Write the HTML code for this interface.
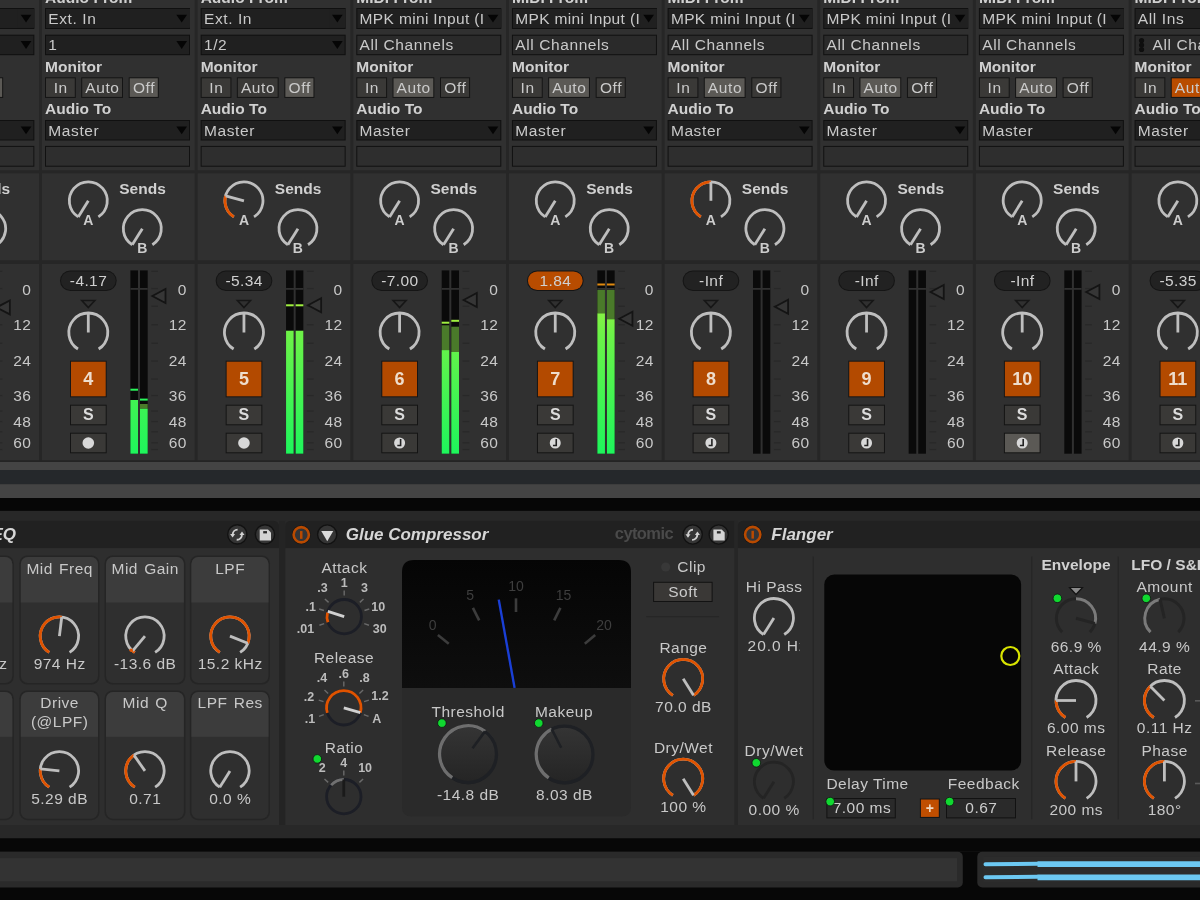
<!DOCTYPE html>
<html><head><meta charset="utf-8"><style>
html,body{margin:0;padding:0;background:#262626;overflow:hidden;width:1200px;height:900px}
svg{display:block;will-change:transform}
#wrap{width:1200px;height:900px}
</style></head><body><div id="wrap">
<svg width="1200" height="900" viewBox="0 0 1200 900">
<defs>
<linearGradient id="mg" gradientUnits="userSpaceOnUse" x1="0" y1="270" x2="0" y2="454">
<stop offset="0" stop-color="#b8f040"/><stop offset="0.35" stop-color="#6cf248"/><stop offset="1" stop-color="#1ef55c"/>
</linearGradient>
</defs>
<rect x="0.00" y="0.00" width="1200.00" height="900.00" fill="#262626"/>
<rect x="-113.65" y="-10.00" width="152.70" height="180.30" fill="#303030"/>
<rect x="-113.65" y="173.40" width="152.70" height="86.90" fill="#303030"/>
<rect x="-113.65" y="264.00" width="152.70" height="196.70" fill="#303030"/>
<text x="-110.65" y="2.55" font-family="Liberation Sans" font-size="15.5" fill="#d0d0d0" text-anchor="start" font-weight="bold" letter-spacing="0.02999999999999997">Audio From</text>
<rect x="-110.65" y="8.00" width="145.00" height="21.00" fill="#101010"/>
<rect x="-109.65" y="9.00" width="143.00" height="19.00" fill="#202020"/>
<text x="-107.35" y="23.85" font-family="Liberation Sans" font-size="15.5" fill="#c9c9c9" text-anchor="start" letter-spacing="0.6"></text>
<rect x="17.85" y="9.00" width="16.50" height="18.80" fill="#202020"/>
<path d="M20.70,14.70 L31.40,14.70 L26.05,22.50 Z" fill="#050505"/>
<rect x="-110.65" y="34.70" width="145.00" height="20.50" fill="#101010"/>
<rect x="-109.65" y="35.70" width="143.00" height="18.50" fill="#202020"/>
<text x="-107.35" y="50.25" font-family="Liberation Sans" font-size="15.5" fill="#c9c9c9" text-anchor="start" letter-spacing="0.6"></text>
<path d="M20.70,41.10 L31.40,41.10 L26.05,48.90 Z" fill="#050505"/>
<text x="-110.65" y="71.75" font-family="Liberation Sans" font-size="15.5" fill="#d0d0d0" text-anchor="start" font-weight="bold" letter-spacing="0.02999999999999997">Monitor</text>
<rect x="-110.65" y="77.30" width="30.80" height="20.60" fill="#141414"/>
<rect x="-109.65" y="78.30" width="28.80" height="18.60" fill="#3a3937"/>
<text x="-94.95" y="92.85" font-family="Liberation Sans" font-size="15.5" fill="#cacaca" text-anchor="middle" letter-spacing="0.6">In</text>
<rect x="-74.45" y="77.30" width="41.80" height="20.60" fill="#141414"/>
<rect x="-73.45" y="78.30" width="39.80" height="18.60" fill="#3a3937"/>
<text x="-53.25" y="92.85" font-family="Liberation Sans" font-size="15.5" fill="#cacaca" text-anchor="middle" letter-spacing="0.6">Auto</text>
<rect x="-26.95" y="77.30" width="30.10" height="20.60" fill="#141414"/>
<rect x="-25.95" y="78.30" width="28.10" height="18.60" fill="#5b5955"/>
<text x="-11.60" y="92.85" font-family="Liberation Sans" font-size="15.5" fill="#cacaca" text-anchor="middle" letter-spacing="0.6">Off</text>
<text x="-110.65" y="114.35" font-family="Liberation Sans" font-size="15.5" fill="#d0d0d0" text-anchor="start" font-weight="bold" letter-spacing="0.02999999999999997">Audio To</text>
<rect x="-110.65" y="120.00" width="145.00" height="20.50" fill="#101010"/>
<rect x="-109.65" y="121.00" width="143.00" height="18.50" fill="#202020"/>
<text x="-107.35" y="135.55" font-family="Liberation Sans" font-size="15.5" fill="#c9c9c9" text-anchor="start" letter-spacing="0.6">Master</text>
<path d="M20.70,126.40 L31.40,126.40 L26.05,134.20 Z" fill="#050505"/>
<rect x="-110.65" y="145.90" width="145.00" height="20.80" fill="#111111"/>
<rect x="-109.65" y="146.90" width="143.00" height="18.80" fill="#2e2e2e"/>
<text x="-13.14" y="194.05" font-family="Liberation Sans" font-size="15.5" fill="#d0d0d0" text-anchor="middle" font-weight="bold" letter-spacing="0.02999999999999997">Sends</text>
<path d="M-77.42,216.91 A19,19 0 1 1 -57.28,216.91" fill="none" stroke="#bebebe" stroke-width="2.8" stroke-linecap="butt"/>
<line x1="-67.35" y1="200.80" x2="-77.42" y2="216.91" stroke="#bebebe" stroke-width="2.8" stroke-linecap="butt"/>
<path d="M-23.42,244.81 A19,19 0 1 1 -3.28,244.81" fill="none" stroke="#bebebe" stroke-width="2.8" stroke-linecap="butt"/>
<line x1="-13.35" y1="228.70" x2="-23.42" y2="244.81" stroke="#bebebe" stroke-width="2.8" stroke-linecap="butt"/>
<text x="-67.35" y="225.31" font-family="Liberation Sans" font-size="14" fill="#cccccc" text-anchor="middle" font-weight="bold">A</text>
<text x="-13.45" y="252.81" font-family="Liberation Sans" font-size="14" fill="#cccccc" text-anchor="middle" font-weight="bold">B</text>
<rect x="-95.65" y="270.40" width="56.70" height="20.60" fill="#151515" rx="10.3"/>
<rect x="-94.65" y="271.40" width="54.70" height="18.60" fill="#222222" rx="9.3"/>
<text x="-67.15" y="285.75" font-family="Liberation Sans" font-size="15.5" fill="#d0d0d0" text-anchor="middle" letter-spacing="0.4">-</text>
<path d="M-73.85,300.5 L-60.85,300.5 L-67.35,307.5 Z" fill="none" stroke="#161616" stroke-width="1.6"/>
<path d="M-77.68,349.04 A19.5,19.5 0 1 1 -57.02,349.04" fill="none" stroke="#bebebe" stroke-width="2.8" stroke-linecap="butt"/>
<line x1="-67.35" y1="332.50" x2="-67.35" y2="313.00" stroke="#bebebe" stroke-width="2.8" stroke-linecap="butt"/>
<rect x="-85.65" y="360.70" width="36.70" height="36.60" fill="#161616"/>
<rect x="-84.65" y="361.70" width="34.70" height="34.60" fill="#b34a00"/>
<text x="-67.35" y="384.94" font-family="Liberation Sans" font-size="18" fill="#eeddcc" text-anchor="middle" font-weight="bold">3</text>
<rect x="-85.65" y="404.70" width="36.70" height="20.60" fill="#141414"/>
<rect x="-84.65" y="405.70" width="34.70" height="18.60" fill="#3a3937"/>
<text x="-67.35" y="420.23" font-family="Liberation Sans" font-size="16" fill="#dcdcdc" text-anchor="middle" font-weight="bold">S</text>
<rect x="-85.65" y="432.70" width="36.70" height="20.60" fill="#141414"/>
<rect x="-84.65" y="433.70" width="34.70" height="18.60" fill="#3a3937"/>
<circle cx="-67.35" cy="443" r="5.8" fill="#d8d8d8"/>
<rect x="-25.25" y="270.40" width="7.60" height="183.30" fill="#0a0a0a"/>
<rect x="-15.65" y="270.40" width="7.70" height="183.30" fill="#0a0a0a"/>
<rect x="-25.25" y="288.00" width="17.30" height="1.80" fill="#303030"/>
<rect x="-4.35" y="270.70" width="6.70" height="1.30" fill="#282828"/>
<rect x="-4.35" y="287.90" width="6.70" height="1.30" fill="#282828"/>
<rect x="-4.35" y="305.60" width="6.70" height="1.30" fill="#282828"/>
<rect x="-4.35" y="324.10" width="6.70" height="1.30" fill="#282828"/>
<rect x="-4.35" y="342.60" width="6.70" height="1.30" fill="#282828"/>
<rect x="-4.35" y="360.40" width="6.70" height="1.30" fill="#282828"/>
<rect x="-4.35" y="378.40" width="6.70" height="1.30" fill="#282828"/>
<rect x="-4.35" y="394.90" width="6.70" height="1.30" fill="#282828"/>
<rect x="-4.35" y="410.40" width="6.70" height="1.30" fill="#282828"/>
<rect x="-4.35" y="420.90" width="6.70" height="1.30" fill="#282828"/>
<rect x="-4.35" y="431.20" width="6.70" height="1.30" fill="#282828"/>
<rect x="-4.35" y="442.20" width="6.70" height="1.30" fill="#282828"/>
<rect x="-4.35" y="448.90" width="6.70" height="1.30" fill="#282828"/>
<path d="M-3.35,307.40 L9.85,300.40 L9.85,314.40 Z" fill="#363636" stroke="#141414" stroke-width="1.8"/>
<text x="31.25" y="295.25" font-family="Liberation Sans" font-size="15.5" fill="#c8c8c8" text-anchor="end" letter-spacing="0.4">0</text>
<text x="31.25" y="330.25" font-family="Liberation Sans" font-size="15.5" fill="#c8c8c8" text-anchor="end" letter-spacing="0.4">12</text>
<text x="31.25" y="366.05" font-family="Liberation Sans" font-size="15.5" fill="#c8c8c8" text-anchor="end" letter-spacing="0.4">24</text>
<text x="31.25" y="400.75" font-family="Liberation Sans" font-size="15.5" fill="#c8c8c8" text-anchor="end" letter-spacing="0.4">36</text>
<text x="31.25" y="427.05" font-family="Liberation Sans" font-size="15.5" fill="#c8c8c8" text-anchor="end" letter-spacing="0.4">48</text>
<text x="31.25" y="447.95" font-family="Liberation Sans" font-size="15.5" fill="#c8c8c8" text-anchor="end" letter-spacing="0.4">60</text>
<rect x="42.00" y="-10.00" width="152.70" height="180.30" fill="#303030"/>
<rect x="42.00" y="173.40" width="152.70" height="86.90" fill="#303030"/>
<rect x="42.00" y="264.00" width="152.70" height="196.70" fill="#303030"/>
<text x="45.00" y="2.55" font-family="Liberation Sans" font-size="15.5" fill="#d0d0d0" text-anchor="start" font-weight="bold" letter-spacing="0.02999999999999997">Audio From</text>
<rect x="45.00" y="8.00" width="145.00" height="21.00" fill="#101010"/>
<rect x="46.00" y="9.00" width="143.00" height="19.00" fill="#202020"/>
<text x="48.30" y="23.85" font-family="Liberation Sans" font-size="15.5" fill="#c9c9c9" text-anchor="start" letter-spacing="0.6">Ext. In</text>
<rect x="173.50" y="9.00" width="16.50" height="18.80" fill="#202020"/>
<path d="M176.35,14.70 L187.05,14.70 L181.70,22.50 Z" fill="#050505"/>
<rect x="45.00" y="34.70" width="145.00" height="20.50" fill="#101010"/>
<rect x="46.00" y="35.70" width="143.00" height="18.50" fill="#202020"/>
<text x="48.30" y="50.25" font-family="Liberation Sans" font-size="15.5" fill="#c9c9c9" text-anchor="start" letter-spacing="0.6">1</text>
<path d="M176.35,41.10 L187.05,41.10 L181.70,48.90 Z" fill="#050505"/>
<text x="45.00" y="71.75" font-family="Liberation Sans" font-size="15.5" fill="#d0d0d0" text-anchor="start" font-weight="bold" letter-spacing="0.02999999999999997">Monitor</text>
<rect x="45.00" y="77.30" width="30.80" height="20.60" fill="#141414"/>
<rect x="46.00" y="78.30" width="28.80" height="18.60" fill="#3a3937"/>
<text x="60.70" y="92.85" font-family="Liberation Sans" font-size="15.5" fill="#cacaca" text-anchor="middle" letter-spacing="0.6">In</text>
<rect x="81.20" y="77.30" width="41.80" height="20.60" fill="#141414"/>
<rect x="82.20" y="78.30" width="39.80" height="18.60" fill="#3a3937"/>
<text x="102.40" y="92.85" font-family="Liberation Sans" font-size="15.5" fill="#cacaca" text-anchor="middle" letter-spacing="0.6">Auto</text>
<rect x="128.70" y="77.30" width="30.10" height="20.60" fill="#141414"/>
<rect x="129.70" y="78.30" width="28.10" height="18.60" fill="#5b5955"/>
<text x="144.05" y="92.85" font-family="Liberation Sans" font-size="15.5" fill="#cacaca" text-anchor="middle" letter-spacing="0.6">Off</text>
<text x="45.00" y="114.35" font-family="Liberation Sans" font-size="15.5" fill="#d0d0d0" text-anchor="start" font-weight="bold" letter-spacing="0.02999999999999997">Audio To</text>
<rect x="45.00" y="120.00" width="145.00" height="20.50" fill="#101010"/>
<rect x="46.00" y="121.00" width="143.00" height="18.50" fill="#202020"/>
<text x="48.30" y="135.55" font-family="Liberation Sans" font-size="15.5" fill="#c9c9c9" text-anchor="start" letter-spacing="0.6">Master</text>
<path d="M176.35,126.40 L187.05,126.40 L181.70,134.20 Z" fill="#050505"/>
<rect x="45.00" y="145.90" width="145.00" height="20.80" fill="#111111"/>
<rect x="46.00" y="146.90" width="143.00" height="18.80" fill="#2e2e2e"/>
<text x="142.51" y="194.05" font-family="Liberation Sans" font-size="15.5" fill="#d0d0d0" text-anchor="middle" font-weight="bold" letter-spacing="0.02999999999999997">Sends</text>
<path d="M78.23,216.91 A19,19 0 1 1 98.37,216.91" fill="none" stroke="#bebebe" stroke-width="2.8" stroke-linecap="butt"/>
<line x1="88.30" y1="200.80" x2="78.23" y2="216.91" stroke="#bebebe" stroke-width="2.8" stroke-linecap="butt"/>
<path d="M132.23,244.81 A19,19 0 1 1 152.37,244.81" fill="none" stroke="#bebebe" stroke-width="2.8" stroke-linecap="butt"/>
<line x1="142.30" y1="228.70" x2="132.23" y2="244.81" stroke="#bebebe" stroke-width="2.8" stroke-linecap="butt"/>
<text x="88.30" y="225.31" font-family="Liberation Sans" font-size="14" fill="#cccccc" text-anchor="middle" font-weight="bold">A</text>
<text x="142.20" y="252.81" font-family="Liberation Sans" font-size="14" fill="#cccccc" text-anchor="middle" font-weight="bold">B</text>
<rect x="60.00" y="270.40" width="56.70" height="20.60" fill="#151515" rx="10.3"/>
<rect x="61.00" y="271.40" width="54.70" height="18.60" fill="#222222" rx="9.3"/>
<text x="88.50" y="285.75" font-family="Liberation Sans" font-size="15.5" fill="#d0d0d0" text-anchor="middle" letter-spacing="0.4">-4.17</text>
<path d="M81.80,300.5 L94.80,300.5 L88.30,307.5 Z" fill="none" stroke="#161616" stroke-width="1.6"/>
<path d="M77.97,349.04 A19.5,19.5 0 1 1 98.63,349.04" fill="none" stroke="#bebebe" stroke-width="2.8" stroke-linecap="butt"/>
<line x1="88.30" y1="332.50" x2="88.30" y2="313.00" stroke="#bebebe" stroke-width="2.8" stroke-linecap="butt"/>
<rect x="70.00" y="360.70" width="36.70" height="36.60" fill="#161616"/>
<rect x="71.00" y="361.70" width="34.70" height="34.60" fill="#b34a00"/>
<text x="88.30" y="384.94" font-family="Liberation Sans" font-size="18" fill="#eeddcc" text-anchor="middle" font-weight="bold">4</text>
<rect x="70.00" y="404.70" width="36.70" height="20.60" fill="#141414"/>
<rect x="71.00" y="405.70" width="34.70" height="18.60" fill="#3a3937"/>
<text x="88.30" y="420.23" font-family="Liberation Sans" font-size="16" fill="#dcdcdc" text-anchor="middle" font-weight="bold">S</text>
<rect x="70.00" y="432.70" width="36.70" height="20.60" fill="#141414"/>
<rect x="71.00" y="433.70" width="34.70" height="18.60" fill="#3a3937"/>
<circle cx="88.30" cy="443" r="5.8" fill="#d8d8d8"/>
<rect x="130.40" y="270.40" width="7.60" height="183.30" fill="#0a0a0a"/>
<rect x="140.00" y="270.40" width="7.70" height="183.30" fill="#0a0a0a"/>
<rect x="130.40" y="288.00" width="17.30" height="1.80" fill="#303030"/>
<rect x="130.40" y="400.00" width="7.60" height="53.70" fill="url(#mg)"/>
<rect x="130.40" y="388.70" width="7.60" height="2.00" fill="#2af55a"/>
<rect x="140.00" y="404.00" width="7.70" height="4.70" fill="#4a7a2a"/>
<rect x="140.00" y="408.70" width="7.70" height="45.00" fill="url(#mg)"/>
<rect x="140.00" y="398.60" width="7.70" height="2.00" fill="#2af55a"/>
<rect x="151.30" y="270.70" width="6.70" height="1.30" fill="#282828"/>
<rect x="151.30" y="287.90" width="6.70" height="1.30" fill="#282828"/>
<rect x="151.30" y="305.60" width="6.70" height="1.30" fill="#282828"/>
<rect x="151.30" y="324.10" width="6.70" height="1.30" fill="#282828"/>
<rect x="151.30" y="342.60" width="6.70" height="1.30" fill="#282828"/>
<rect x="151.30" y="360.40" width="6.70" height="1.30" fill="#282828"/>
<rect x="151.30" y="378.40" width="6.70" height="1.30" fill="#282828"/>
<rect x="151.30" y="394.90" width="6.70" height="1.30" fill="#282828"/>
<rect x="151.30" y="410.40" width="6.70" height="1.30" fill="#282828"/>
<rect x="151.30" y="420.90" width="6.70" height="1.30" fill="#282828"/>
<rect x="151.30" y="431.20" width="6.70" height="1.30" fill="#282828"/>
<rect x="151.30" y="442.20" width="6.70" height="1.30" fill="#282828"/>
<rect x="151.30" y="448.90" width="6.70" height="1.30" fill="#282828"/>
<path d="M152.30,296.00 L165.50,289.00 L165.50,303.00 Z" fill="#363636" stroke="#141414" stroke-width="1.8"/>
<text x="186.90" y="295.25" font-family="Liberation Sans" font-size="15.5" fill="#c8c8c8" text-anchor="end" letter-spacing="0.4">0</text>
<text x="186.90" y="330.25" font-family="Liberation Sans" font-size="15.5" fill="#c8c8c8" text-anchor="end" letter-spacing="0.4">12</text>
<text x="186.90" y="366.05" font-family="Liberation Sans" font-size="15.5" fill="#c8c8c8" text-anchor="end" letter-spacing="0.4">24</text>
<text x="186.90" y="400.75" font-family="Liberation Sans" font-size="15.5" fill="#c8c8c8" text-anchor="end" letter-spacing="0.4">36</text>
<text x="186.90" y="427.05" font-family="Liberation Sans" font-size="15.5" fill="#c8c8c8" text-anchor="end" letter-spacing="0.4">48</text>
<text x="186.90" y="447.95" font-family="Liberation Sans" font-size="15.5" fill="#c8c8c8" text-anchor="end" letter-spacing="0.4">60</text>
<rect x="197.65" y="-10.00" width="152.70" height="180.30" fill="#303030"/>
<rect x="197.65" y="173.40" width="152.70" height="86.90" fill="#303030"/>
<rect x="197.65" y="264.00" width="152.70" height="196.70" fill="#303030"/>
<text x="200.65" y="2.55" font-family="Liberation Sans" font-size="15.5" fill="#d0d0d0" text-anchor="start" font-weight="bold" letter-spacing="0.02999999999999997">Audio From</text>
<rect x="200.65" y="8.00" width="145.00" height="21.00" fill="#101010"/>
<rect x="201.65" y="9.00" width="143.00" height="19.00" fill="#202020"/>
<text x="203.95" y="23.85" font-family="Liberation Sans" font-size="15.5" fill="#c9c9c9" text-anchor="start" letter-spacing="0.6">Ext. In</text>
<rect x="329.15" y="9.00" width="16.50" height="18.80" fill="#202020"/>
<path d="M332.00,14.70 L342.70,14.70 L337.35,22.50 Z" fill="#050505"/>
<rect x="200.65" y="34.70" width="145.00" height="20.50" fill="#101010"/>
<rect x="201.65" y="35.70" width="143.00" height="18.50" fill="#202020"/>
<text x="203.95" y="50.25" font-family="Liberation Sans" font-size="15.5" fill="#c9c9c9" text-anchor="start" letter-spacing="0.6">1/2</text>
<path d="M332.00,41.10 L342.70,41.10 L337.35,48.90 Z" fill="#050505"/>
<text x="200.65" y="71.75" font-family="Liberation Sans" font-size="15.5" fill="#d0d0d0" text-anchor="start" font-weight="bold" letter-spacing="0.02999999999999997">Monitor</text>
<rect x="200.65" y="77.30" width="30.80" height="20.60" fill="#141414"/>
<rect x="201.65" y="78.30" width="28.80" height="18.60" fill="#3a3937"/>
<text x="216.35" y="92.85" font-family="Liberation Sans" font-size="15.5" fill="#cacaca" text-anchor="middle" letter-spacing="0.6">In</text>
<rect x="236.85" y="77.30" width="41.80" height="20.60" fill="#141414"/>
<rect x="237.85" y="78.30" width="39.80" height="18.60" fill="#3a3937"/>
<text x="258.05" y="92.85" font-family="Liberation Sans" font-size="15.5" fill="#cacaca" text-anchor="middle" letter-spacing="0.6">Auto</text>
<rect x="284.35" y="77.30" width="30.10" height="20.60" fill="#141414"/>
<rect x="285.35" y="78.30" width="28.10" height="18.60" fill="#5b5955"/>
<text x="299.70" y="92.85" font-family="Liberation Sans" font-size="15.5" fill="#cacaca" text-anchor="middle" letter-spacing="0.6">Off</text>
<text x="200.65" y="114.35" font-family="Liberation Sans" font-size="15.5" fill="#d0d0d0" text-anchor="start" font-weight="bold" letter-spacing="0.02999999999999997">Audio To</text>
<rect x="200.65" y="120.00" width="145.00" height="20.50" fill="#101010"/>
<rect x="201.65" y="121.00" width="143.00" height="18.50" fill="#202020"/>
<text x="203.95" y="135.55" font-family="Liberation Sans" font-size="15.5" fill="#c9c9c9" text-anchor="start" letter-spacing="0.6">Master</text>
<path d="M332.00,126.40 L342.70,126.40 L337.35,134.20 Z" fill="#050505"/>
<rect x="200.65" y="145.90" width="145.00" height="20.80" fill="#111111"/>
<rect x="201.65" y="146.90" width="143.00" height="18.80" fill="#2e2e2e"/>
<text x="298.16" y="194.05" font-family="Liberation Sans" font-size="15.5" fill="#d0d0d0" text-anchor="middle" font-weight="bold" letter-spacing="0.02999999999999997">Sends</text>
<path d="M233.88,216.91 A19,19 0 1 1 254.02,216.91" fill="none" stroke="#bebebe" stroke-width="2.8" stroke-linecap="butt"/>
<path d="M233.88,216.91 A19,19 0 0 1 225.60,195.88" fill="none" stroke="#e05300" stroke-width="2.8" stroke-linecap="butt"/>
<line x1="243.95" y1="200.80" x2="225.60" y2="195.88" stroke="#bebebe" stroke-width="2.8" stroke-linecap="butt"/>
<path d="M287.88,244.81 A19,19 0 1 1 308.02,244.81" fill="none" stroke="#bebebe" stroke-width="2.8" stroke-linecap="butt"/>
<line x1="297.95" y1="228.70" x2="287.88" y2="244.81" stroke="#bebebe" stroke-width="2.8" stroke-linecap="butt"/>
<text x="243.95" y="225.31" font-family="Liberation Sans" font-size="14" fill="#cccccc" text-anchor="middle" font-weight="bold">A</text>
<text x="297.85" y="252.81" font-family="Liberation Sans" font-size="14" fill="#cccccc" text-anchor="middle" font-weight="bold">B</text>
<rect x="215.65" y="270.40" width="56.70" height="20.60" fill="#151515" rx="10.3"/>
<rect x="216.65" y="271.40" width="54.70" height="18.60" fill="#222222" rx="9.3"/>
<text x="244.15" y="285.75" font-family="Liberation Sans" font-size="15.5" fill="#d0d0d0" text-anchor="middle" letter-spacing="0.4">-5.34</text>
<path d="M237.45,300.5 L250.45,300.5 L243.95,307.5 Z" fill="none" stroke="#161616" stroke-width="1.6"/>
<path d="M233.62,349.04 A19.5,19.5 0 1 1 254.28,349.04" fill="none" stroke="#bebebe" stroke-width="2.8" stroke-linecap="butt"/>
<line x1="243.95" y1="332.50" x2="243.95" y2="313.00" stroke="#bebebe" stroke-width="2.8" stroke-linecap="butt"/>
<rect x="225.65" y="360.70" width="36.70" height="36.60" fill="#161616"/>
<rect x="226.65" y="361.70" width="34.70" height="34.60" fill="#b34a00"/>
<text x="243.95" y="384.94" font-family="Liberation Sans" font-size="18" fill="#eeddcc" text-anchor="middle" font-weight="bold">5</text>
<rect x="225.65" y="404.70" width="36.70" height="20.60" fill="#141414"/>
<rect x="226.65" y="405.70" width="34.70" height="18.60" fill="#3a3937"/>
<text x="243.95" y="420.23" font-family="Liberation Sans" font-size="16" fill="#dcdcdc" text-anchor="middle" font-weight="bold">S</text>
<rect x="225.65" y="432.70" width="36.70" height="20.60" fill="#141414"/>
<rect x="226.65" y="433.70" width="34.70" height="18.60" fill="#3a3937"/>
<circle cx="243.95" cy="443" r="5.8" fill="#d8d8d8"/>
<rect x="286.05" y="270.40" width="7.60" height="183.30" fill="#0a0a0a"/>
<rect x="295.65" y="270.40" width="7.70" height="183.30" fill="#0a0a0a"/>
<rect x="286.05" y="288.00" width="17.30" height="1.80" fill="#303030"/>
<rect x="286.05" y="330.70" width="7.60" height="123.00" fill="url(#mg)"/>
<rect x="286.05" y="304.30" width="7.60" height="2.00" fill="#a0f040"/>
<rect x="295.65" y="330.70" width="7.70" height="123.00" fill="url(#mg)"/>
<rect x="295.65" y="304.30" width="7.70" height="2.00" fill="#a0f040"/>
<rect x="306.95" y="270.70" width="6.70" height="1.30" fill="#282828"/>
<rect x="306.95" y="287.90" width="6.70" height="1.30" fill="#282828"/>
<rect x="306.95" y="305.60" width="6.70" height="1.30" fill="#282828"/>
<rect x="306.95" y="324.10" width="6.70" height="1.30" fill="#282828"/>
<rect x="306.95" y="342.60" width="6.70" height="1.30" fill="#282828"/>
<rect x="306.95" y="360.40" width="6.70" height="1.30" fill="#282828"/>
<rect x="306.95" y="378.40" width="6.70" height="1.30" fill="#282828"/>
<rect x="306.95" y="394.90" width="6.70" height="1.30" fill="#282828"/>
<rect x="306.95" y="410.40" width="6.70" height="1.30" fill="#282828"/>
<rect x="306.95" y="420.90" width="6.70" height="1.30" fill="#282828"/>
<rect x="306.95" y="431.20" width="6.70" height="1.30" fill="#282828"/>
<rect x="306.95" y="442.20" width="6.70" height="1.30" fill="#282828"/>
<rect x="306.95" y="448.90" width="6.70" height="1.30" fill="#282828"/>
<path d="M307.95,305.30 L321.15,298.30 L321.15,312.30 Z" fill="#363636" stroke="#141414" stroke-width="1.8"/>
<text x="342.55" y="295.25" font-family="Liberation Sans" font-size="15.5" fill="#c8c8c8" text-anchor="end" letter-spacing="0.4">0</text>
<text x="342.55" y="330.25" font-family="Liberation Sans" font-size="15.5" fill="#c8c8c8" text-anchor="end" letter-spacing="0.4">12</text>
<text x="342.55" y="366.05" font-family="Liberation Sans" font-size="15.5" fill="#c8c8c8" text-anchor="end" letter-spacing="0.4">24</text>
<text x="342.55" y="400.75" font-family="Liberation Sans" font-size="15.5" fill="#c8c8c8" text-anchor="end" letter-spacing="0.4">36</text>
<text x="342.55" y="427.05" font-family="Liberation Sans" font-size="15.5" fill="#c8c8c8" text-anchor="end" letter-spacing="0.4">48</text>
<text x="342.55" y="447.95" font-family="Liberation Sans" font-size="15.5" fill="#c8c8c8" text-anchor="end" letter-spacing="0.4">60</text>
<rect x="353.30" y="-10.00" width="152.70" height="180.30" fill="#303030"/>
<rect x="353.30" y="173.40" width="152.70" height="86.90" fill="#303030"/>
<rect x="353.30" y="264.00" width="152.70" height="196.70" fill="#303030"/>
<text x="356.30" y="2.55" font-family="Liberation Sans" font-size="15.5" fill="#d0d0d0" text-anchor="start" font-weight="bold" letter-spacing="0.02999999999999997">MIDI From</text>
<rect x="356.30" y="8.00" width="145.00" height="21.00" fill="#101010"/>
<rect x="357.30" y="9.00" width="143.00" height="19.00" fill="#202020"/>
<text x="359.60" y="23.85" font-family="Liberation Sans" font-size="15.5" fill="#c9c9c9" text-anchor="start" letter-spacing="0.35">MPK mini Input (I</text>
<rect x="484.80" y="9.00" width="16.50" height="18.80" fill="#202020"/>
<path d="M487.65,14.70 L498.35,14.70 L493.00,22.50 Z" fill="#050505"/>
<rect x="356.30" y="34.70" width="145.00" height="20.50" fill="#111111"/>
<rect x="357.30" y="35.70" width="143.00" height="18.50" fill="#2a2a2a"/>
<text x="359.60" y="50.25" font-family="Liberation Sans" font-size="15.5" fill="#c9c9c9" text-anchor="start" letter-spacing="0.6">All Channels</text>
<text x="356.30" y="71.75" font-family="Liberation Sans" font-size="15.5" fill="#d0d0d0" text-anchor="start" font-weight="bold" letter-spacing="0.02999999999999997">Monitor</text>
<rect x="356.30" y="77.30" width="30.80" height="20.60" fill="#141414"/>
<rect x="357.30" y="78.30" width="28.80" height="18.60" fill="#3a3937"/>
<text x="372.00" y="92.85" font-family="Liberation Sans" font-size="15.5" fill="#cacaca" text-anchor="middle" letter-spacing="0.6">In</text>
<rect x="392.50" y="77.30" width="41.80" height="20.60" fill="#141414"/>
<rect x="393.50" y="78.30" width="39.80" height="18.60" fill="#5b5955"/>
<text x="413.70" y="92.85" font-family="Liberation Sans" font-size="15.5" fill="#cacaca" text-anchor="middle" letter-spacing="0.6">Auto</text>
<rect x="440.00" y="77.30" width="30.10" height="20.60" fill="#141414"/>
<rect x="441.00" y="78.30" width="28.10" height="18.60" fill="#3a3937"/>
<text x="455.35" y="92.85" font-family="Liberation Sans" font-size="15.5" fill="#cacaca" text-anchor="middle" letter-spacing="0.6">Off</text>
<text x="356.30" y="114.35" font-family="Liberation Sans" font-size="15.5" fill="#d0d0d0" text-anchor="start" font-weight="bold" letter-spacing="0.02999999999999997">Audio To</text>
<rect x="356.30" y="120.00" width="145.00" height="20.50" fill="#101010"/>
<rect x="357.30" y="121.00" width="143.00" height="18.50" fill="#202020"/>
<text x="359.60" y="135.55" font-family="Liberation Sans" font-size="15.5" fill="#c9c9c9" text-anchor="start" letter-spacing="0.6">Master</text>
<path d="M487.65,126.40 L498.35,126.40 L493.00,134.20 Z" fill="#050505"/>
<rect x="356.30" y="145.90" width="145.00" height="20.80" fill="#111111"/>
<rect x="357.30" y="146.90" width="143.00" height="18.80" fill="#2e2e2e"/>
<text x="453.81" y="194.05" font-family="Liberation Sans" font-size="15.5" fill="#d0d0d0" text-anchor="middle" font-weight="bold" letter-spacing="0.02999999999999997">Sends</text>
<path d="M389.53,216.91 A19,19 0 1 1 409.67,216.91" fill="none" stroke="#bebebe" stroke-width="2.8" stroke-linecap="butt"/>
<line x1="399.60" y1="200.80" x2="389.53" y2="216.91" stroke="#bebebe" stroke-width="2.8" stroke-linecap="butt"/>
<path d="M443.53,244.81 A19,19 0 1 1 463.67,244.81" fill="none" stroke="#bebebe" stroke-width="2.8" stroke-linecap="butt"/>
<line x1="453.60" y1="228.70" x2="443.53" y2="244.81" stroke="#bebebe" stroke-width="2.8" stroke-linecap="butt"/>
<text x="399.60" y="225.31" font-family="Liberation Sans" font-size="14" fill="#cccccc" text-anchor="middle" font-weight="bold">A</text>
<text x="453.50" y="252.81" font-family="Liberation Sans" font-size="14" fill="#cccccc" text-anchor="middle" font-weight="bold">B</text>
<rect x="371.30" y="270.40" width="56.70" height="20.60" fill="#151515" rx="10.3"/>
<rect x="372.30" y="271.40" width="54.70" height="18.60" fill="#222222" rx="9.3"/>
<text x="399.80" y="285.75" font-family="Liberation Sans" font-size="15.5" fill="#d0d0d0" text-anchor="middle" letter-spacing="0.4">-7.00</text>
<path d="M393.10,300.5 L406.10,300.5 L399.60,307.5 Z" fill="none" stroke="#161616" stroke-width="1.6"/>
<path d="M389.27,349.04 A19.5,19.5 0 1 1 409.93,349.04" fill="none" stroke="#bebebe" stroke-width="2.8" stroke-linecap="butt"/>
<line x1="399.60" y1="332.50" x2="399.60" y2="313.00" stroke="#bebebe" stroke-width="2.8" stroke-linecap="butt"/>
<rect x="381.30" y="360.70" width="36.70" height="36.60" fill="#161616"/>
<rect x="382.30" y="361.70" width="34.70" height="34.60" fill="#b34a00"/>
<text x="399.60" y="384.94" font-family="Liberation Sans" font-size="18" fill="#eeddcc" text-anchor="middle" font-weight="bold">6</text>
<rect x="381.30" y="404.70" width="36.70" height="20.60" fill="#141414"/>
<rect x="382.30" y="405.70" width="34.70" height="18.60" fill="#3a3937"/>
<text x="399.60" y="420.23" font-family="Liberation Sans" font-size="16" fill="#dcdcdc" text-anchor="middle" font-weight="bold">S</text>
<rect x="381.30" y="432.70" width="36.70" height="20.60" fill="#141414"/>
<rect x="382.30" y="433.70" width="34.70" height="18.60" fill="#3a3937"/>
<circle cx="399.60" cy="443" r="5.5" fill="#d8d8d8"/>
<path d="M400.60,439 L400.60,445.5 L397.30,445.5" fill="none" stroke="#222" stroke-width="1.6"/>
<rect x="441.70" y="270.40" width="7.60" height="183.30" fill="#0a0a0a"/>
<rect x="451.30" y="270.40" width="7.70" height="183.30" fill="#0a0a0a"/>
<rect x="441.70" y="288.00" width="17.30" height="1.80" fill="#303030"/>
<rect x="441.70" y="325.30" width="7.60" height="24.80" fill="#4a7a2a"/>
<rect x="441.70" y="350.10" width="7.60" height="103.60" fill="url(#mg)"/>
<rect x="441.70" y="321.70" width="7.60" height="2.00" fill="#a0f040"/>
<rect x="451.30" y="326.70" width="7.70" height="25.30" fill="#4a7a2a"/>
<rect x="451.30" y="352.00" width="7.70" height="101.70" fill="url(#mg)"/>
<rect x="451.30" y="319.80" width="7.70" height="2.00" fill="#a0f040"/>
<rect x="462.60" y="270.70" width="6.70" height="1.30" fill="#282828"/>
<rect x="462.60" y="287.90" width="6.70" height="1.30" fill="#282828"/>
<rect x="462.60" y="305.60" width="6.70" height="1.30" fill="#282828"/>
<rect x="462.60" y="324.10" width="6.70" height="1.30" fill="#282828"/>
<rect x="462.60" y="342.60" width="6.70" height="1.30" fill="#282828"/>
<rect x="462.60" y="360.40" width="6.70" height="1.30" fill="#282828"/>
<rect x="462.60" y="378.40" width="6.70" height="1.30" fill="#282828"/>
<rect x="462.60" y="394.90" width="6.70" height="1.30" fill="#282828"/>
<rect x="462.60" y="410.40" width="6.70" height="1.30" fill="#282828"/>
<rect x="462.60" y="420.90" width="6.70" height="1.30" fill="#282828"/>
<rect x="462.60" y="431.20" width="6.70" height="1.30" fill="#282828"/>
<rect x="462.60" y="442.20" width="6.70" height="1.30" fill="#282828"/>
<rect x="462.60" y="448.90" width="6.70" height="1.30" fill="#282828"/>
<path d="M463.60,300.00 L476.80,293.00 L476.80,307.00 Z" fill="#363636" stroke="#141414" stroke-width="1.8"/>
<text x="498.20" y="295.25" font-family="Liberation Sans" font-size="15.5" fill="#c8c8c8" text-anchor="end" letter-spacing="0.4">0</text>
<text x="498.20" y="330.25" font-family="Liberation Sans" font-size="15.5" fill="#c8c8c8" text-anchor="end" letter-spacing="0.4">12</text>
<text x="498.20" y="366.05" font-family="Liberation Sans" font-size="15.5" fill="#c8c8c8" text-anchor="end" letter-spacing="0.4">24</text>
<text x="498.20" y="400.75" font-family="Liberation Sans" font-size="15.5" fill="#c8c8c8" text-anchor="end" letter-spacing="0.4">36</text>
<text x="498.20" y="427.05" font-family="Liberation Sans" font-size="15.5" fill="#c8c8c8" text-anchor="end" letter-spacing="0.4">48</text>
<text x="498.20" y="447.95" font-family="Liberation Sans" font-size="15.5" fill="#c8c8c8" text-anchor="end" letter-spacing="0.4">60</text>
<rect x="508.95" y="-10.00" width="152.70" height="180.30" fill="#303030"/>
<rect x="508.95" y="173.40" width="152.70" height="86.90" fill="#303030"/>
<rect x="508.95" y="264.00" width="152.70" height="196.70" fill="#303030"/>
<text x="511.95" y="2.55" font-family="Liberation Sans" font-size="15.5" fill="#d0d0d0" text-anchor="start" font-weight="bold" letter-spacing="0.02999999999999997">MIDI From</text>
<rect x="511.95" y="8.00" width="145.00" height="21.00" fill="#101010"/>
<rect x="512.95" y="9.00" width="143.00" height="19.00" fill="#202020"/>
<text x="515.25" y="23.85" font-family="Liberation Sans" font-size="15.5" fill="#c9c9c9" text-anchor="start" letter-spacing="0.35">MPK mini Input (I</text>
<rect x="640.45" y="9.00" width="16.50" height="18.80" fill="#202020"/>
<path d="M643.30,14.70 L654.00,14.70 L648.65,22.50 Z" fill="#050505"/>
<rect x="511.95" y="34.70" width="145.00" height="20.50" fill="#111111"/>
<rect x="512.95" y="35.70" width="143.00" height="18.50" fill="#2a2a2a"/>
<text x="515.25" y="50.25" font-family="Liberation Sans" font-size="15.5" fill="#c9c9c9" text-anchor="start" letter-spacing="0.6">All Channels</text>
<text x="511.95" y="71.75" font-family="Liberation Sans" font-size="15.5" fill="#d0d0d0" text-anchor="start" font-weight="bold" letter-spacing="0.02999999999999997">Monitor</text>
<rect x="511.95" y="77.30" width="30.80" height="20.60" fill="#141414"/>
<rect x="512.95" y="78.30" width="28.80" height="18.60" fill="#3a3937"/>
<text x="527.65" y="92.85" font-family="Liberation Sans" font-size="15.5" fill="#cacaca" text-anchor="middle" letter-spacing="0.6">In</text>
<rect x="548.15" y="77.30" width="41.80" height="20.60" fill="#141414"/>
<rect x="549.15" y="78.30" width="39.80" height="18.60" fill="#5b5955"/>
<text x="569.35" y="92.85" font-family="Liberation Sans" font-size="15.5" fill="#cacaca" text-anchor="middle" letter-spacing="0.6">Auto</text>
<rect x="595.65" y="77.30" width="30.10" height="20.60" fill="#141414"/>
<rect x="596.65" y="78.30" width="28.10" height="18.60" fill="#3a3937"/>
<text x="611.00" y="92.85" font-family="Liberation Sans" font-size="15.5" fill="#cacaca" text-anchor="middle" letter-spacing="0.6">Off</text>
<text x="511.95" y="114.35" font-family="Liberation Sans" font-size="15.5" fill="#d0d0d0" text-anchor="start" font-weight="bold" letter-spacing="0.02999999999999997">Audio To</text>
<rect x="511.95" y="120.00" width="145.00" height="20.50" fill="#101010"/>
<rect x="512.95" y="121.00" width="143.00" height="18.50" fill="#202020"/>
<text x="515.25" y="135.55" font-family="Liberation Sans" font-size="15.5" fill="#c9c9c9" text-anchor="start" letter-spacing="0.6">Master</text>
<path d="M643.30,126.40 L654.00,126.40 L648.65,134.20 Z" fill="#050505"/>
<rect x="511.95" y="145.90" width="145.00" height="20.80" fill="#111111"/>
<rect x="512.95" y="146.90" width="143.00" height="18.80" fill="#2e2e2e"/>
<text x="609.47" y="194.05" font-family="Liberation Sans" font-size="15.5" fill="#d0d0d0" text-anchor="middle" font-weight="bold" letter-spacing="0.02999999999999997">Sends</text>
<path d="M545.18,216.91 A19,19 0 1 1 565.32,216.91" fill="none" stroke="#bebebe" stroke-width="2.8" stroke-linecap="butt"/>
<line x1="555.25" y1="200.80" x2="545.18" y2="216.91" stroke="#bebebe" stroke-width="2.8" stroke-linecap="butt"/>
<path d="M599.18,244.81 A19,19 0 1 1 619.32,244.81" fill="none" stroke="#bebebe" stroke-width="2.8" stroke-linecap="butt"/>
<line x1="609.25" y1="228.70" x2="599.18" y2="244.81" stroke="#bebebe" stroke-width="2.8" stroke-linecap="butt"/>
<text x="555.25" y="225.31" font-family="Liberation Sans" font-size="14" fill="#cccccc" text-anchor="middle" font-weight="bold">A</text>
<text x="609.15" y="252.81" font-family="Liberation Sans" font-size="14" fill="#cccccc" text-anchor="middle" font-weight="bold">B</text>
<rect x="526.95" y="270.40" width="56.70" height="20.60" fill="#151515" rx="10.3"/>
<rect x="527.95" y="271.40" width="54.70" height="18.60" fill="#b84c00" rx="9.3"/>
<text x="555.45" y="285.75" font-family="Liberation Sans" font-size="15.5" fill="#d0d0d0" text-anchor="middle" letter-spacing="0.4">1.84</text>
<path d="M548.75,300.5 L561.75,300.5 L555.25,307.5 Z" fill="none" stroke="#161616" stroke-width="1.6"/>
<path d="M544.92,349.04 A19.5,19.5 0 1 1 565.58,349.04" fill="none" stroke="#bebebe" stroke-width="2.8" stroke-linecap="butt"/>
<line x1="555.25" y1="332.50" x2="555.25" y2="313.00" stroke="#bebebe" stroke-width="2.8" stroke-linecap="butt"/>
<rect x="536.95" y="360.70" width="36.70" height="36.60" fill="#161616"/>
<rect x="537.95" y="361.70" width="34.70" height="34.60" fill="#b34a00"/>
<text x="555.25" y="384.94" font-family="Liberation Sans" font-size="18" fill="#eeddcc" text-anchor="middle" font-weight="bold">7</text>
<rect x="536.95" y="404.70" width="36.70" height="20.60" fill="#141414"/>
<rect x="537.95" y="405.70" width="34.70" height="18.60" fill="#3a3937"/>
<text x="555.25" y="420.23" font-family="Liberation Sans" font-size="16" fill="#dcdcdc" text-anchor="middle" font-weight="bold">S</text>
<rect x="536.95" y="432.70" width="36.70" height="20.60" fill="#141414"/>
<rect x="537.95" y="433.70" width="34.70" height="18.60" fill="#3a3937"/>
<circle cx="555.25" cy="443" r="5.5" fill="#d8d8d8"/>
<path d="M556.25,439 L556.25,445.5 L552.95,445.5" fill="none" stroke="#222" stroke-width="1.6"/>
<rect x="597.35" y="270.40" width="7.60" height="183.30" fill="#0a0a0a"/>
<rect x="606.95" y="270.40" width="7.70" height="183.30" fill="#0a0a0a"/>
<rect x="597.35" y="288.00" width="17.30" height="1.80" fill="#303030"/>
<rect x="597.35" y="289.90" width="7.60" height="23.40" fill="#4a7a2a"/>
<rect x="597.35" y="313.30" width="7.60" height="140.40" fill="url(#mg)"/>
<rect x="597.35" y="283.50" width="7.60" height="2.00" fill="#e08a10"/>
<rect x="606.95" y="289.90" width="7.70" height="29.30" fill="#4a7a2a"/>
<rect x="606.95" y="319.20" width="7.70" height="134.50" fill="url(#mg)"/>
<rect x="606.95" y="283.50" width="7.70" height="2.00" fill="#e08a10"/>
<rect x="618.25" y="270.70" width="6.70" height="1.30" fill="#282828"/>
<rect x="618.25" y="287.90" width="6.70" height="1.30" fill="#282828"/>
<rect x="618.25" y="305.60" width="6.70" height="1.30" fill="#282828"/>
<rect x="618.25" y="324.10" width="6.70" height="1.30" fill="#282828"/>
<rect x="618.25" y="342.60" width="6.70" height="1.30" fill="#282828"/>
<rect x="618.25" y="360.40" width="6.70" height="1.30" fill="#282828"/>
<rect x="618.25" y="378.40" width="6.70" height="1.30" fill="#282828"/>
<rect x="618.25" y="394.90" width="6.70" height="1.30" fill="#282828"/>
<rect x="618.25" y="410.40" width="6.70" height="1.30" fill="#282828"/>
<rect x="618.25" y="420.90" width="6.70" height="1.30" fill="#282828"/>
<rect x="618.25" y="431.20" width="6.70" height="1.30" fill="#282828"/>
<rect x="618.25" y="442.20" width="6.70" height="1.30" fill="#282828"/>
<rect x="618.25" y="448.90" width="6.70" height="1.30" fill="#282828"/>
<path d="M619.25,318.70 L632.45,311.70 L632.45,325.70 Z" fill="#363636" stroke="#141414" stroke-width="1.8"/>
<text x="653.85" y="295.25" font-family="Liberation Sans" font-size="15.5" fill="#c8c8c8" text-anchor="end" letter-spacing="0.4">0</text>
<text x="653.85" y="330.25" font-family="Liberation Sans" font-size="15.5" fill="#c8c8c8" text-anchor="end" letter-spacing="0.4">12</text>
<text x="653.85" y="366.05" font-family="Liberation Sans" font-size="15.5" fill="#c8c8c8" text-anchor="end" letter-spacing="0.4">24</text>
<text x="653.85" y="400.75" font-family="Liberation Sans" font-size="15.5" fill="#c8c8c8" text-anchor="end" letter-spacing="0.4">36</text>
<text x="653.85" y="427.05" font-family="Liberation Sans" font-size="15.5" fill="#c8c8c8" text-anchor="end" letter-spacing="0.4">48</text>
<text x="653.85" y="447.95" font-family="Liberation Sans" font-size="15.5" fill="#c8c8c8" text-anchor="end" letter-spacing="0.4">60</text>
<rect x="664.60" y="-10.00" width="152.70" height="180.30" fill="#303030"/>
<rect x="664.60" y="173.40" width="152.70" height="86.90" fill="#303030"/>
<rect x="664.60" y="264.00" width="152.70" height="196.70" fill="#303030"/>
<text x="667.60" y="2.55" font-family="Liberation Sans" font-size="15.5" fill="#d0d0d0" text-anchor="start" font-weight="bold" letter-spacing="0.02999999999999997">MIDI From</text>
<rect x="667.60" y="8.00" width="145.00" height="21.00" fill="#101010"/>
<rect x="668.60" y="9.00" width="143.00" height="19.00" fill="#202020"/>
<text x="670.90" y="23.85" font-family="Liberation Sans" font-size="15.5" fill="#c9c9c9" text-anchor="start" letter-spacing="0.35">MPK mini Input (I</text>
<rect x="796.10" y="9.00" width="16.50" height="18.80" fill="#202020"/>
<path d="M798.95,14.70 L809.65,14.70 L804.30,22.50 Z" fill="#050505"/>
<rect x="667.60" y="34.70" width="145.00" height="20.50" fill="#111111"/>
<rect x="668.60" y="35.70" width="143.00" height="18.50" fill="#2a2a2a"/>
<text x="670.90" y="50.25" font-family="Liberation Sans" font-size="15.5" fill="#c9c9c9" text-anchor="start" letter-spacing="0.6">All Channels</text>
<text x="667.60" y="71.75" font-family="Liberation Sans" font-size="15.5" fill="#d0d0d0" text-anchor="start" font-weight="bold" letter-spacing="0.02999999999999997">Monitor</text>
<rect x="667.60" y="77.30" width="30.80" height="20.60" fill="#141414"/>
<rect x="668.60" y="78.30" width="28.80" height="18.60" fill="#3a3937"/>
<text x="683.30" y="92.85" font-family="Liberation Sans" font-size="15.5" fill="#cacaca" text-anchor="middle" letter-spacing="0.6">In</text>
<rect x="703.80" y="77.30" width="41.80" height="20.60" fill="#141414"/>
<rect x="704.80" y="78.30" width="39.80" height="18.60" fill="#5b5955"/>
<text x="725.00" y="92.85" font-family="Liberation Sans" font-size="15.5" fill="#cacaca" text-anchor="middle" letter-spacing="0.6">Auto</text>
<rect x="751.30" y="77.30" width="30.10" height="20.60" fill="#141414"/>
<rect x="752.30" y="78.30" width="28.10" height="18.60" fill="#3a3937"/>
<text x="766.65" y="92.85" font-family="Liberation Sans" font-size="15.5" fill="#cacaca" text-anchor="middle" letter-spacing="0.6">Off</text>
<text x="667.60" y="114.35" font-family="Liberation Sans" font-size="15.5" fill="#d0d0d0" text-anchor="start" font-weight="bold" letter-spacing="0.02999999999999997">Audio To</text>
<rect x="667.60" y="120.00" width="145.00" height="20.50" fill="#101010"/>
<rect x="668.60" y="121.00" width="143.00" height="18.50" fill="#202020"/>
<text x="670.90" y="135.55" font-family="Liberation Sans" font-size="15.5" fill="#c9c9c9" text-anchor="start" letter-spacing="0.6">Master</text>
<path d="M798.95,126.40 L809.65,126.40 L804.30,134.20 Z" fill="#050505"/>
<rect x="667.60" y="145.90" width="145.00" height="20.80" fill="#111111"/>
<rect x="668.60" y="146.90" width="143.00" height="18.80" fill="#2e2e2e"/>
<text x="765.12" y="194.05" font-family="Liberation Sans" font-size="15.5" fill="#d0d0d0" text-anchor="middle" font-weight="bold" letter-spacing="0.02999999999999997">Sends</text>
<path d="M700.83,216.91 A19,19 0 1 1 720.97,216.91" fill="none" stroke="#bebebe" stroke-width="2.8" stroke-linecap="butt"/>
<path d="M700.83,216.91 A19,19 0 0 1 710.90,181.80" fill="none" stroke="#e05300" stroke-width="2.8" stroke-linecap="butt"/>
<line x1="710.90" y1="200.80" x2="710.90" y2="181.80" stroke="#bebebe" stroke-width="2.8" stroke-linecap="butt"/>
<path d="M754.83,244.81 A19,19 0 1 1 774.97,244.81" fill="none" stroke="#bebebe" stroke-width="2.8" stroke-linecap="butt"/>
<line x1="764.90" y1="228.70" x2="754.83" y2="244.81" stroke="#bebebe" stroke-width="2.8" stroke-linecap="butt"/>
<text x="710.90" y="225.31" font-family="Liberation Sans" font-size="14" fill="#cccccc" text-anchor="middle" font-weight="bold">A</text>
<text x="764.80" y="252.81" font-family="Liberation Sans" font-size="14" fill="#cccccc" text-anchor="middle" font-weight="bold">B</text>
<rect x="682.60" y="270.40" width="56.70" height="20.60" fill="#151515" rx="10.3"/>
<rect x="683.60" y="271.40" width="54.70" height="18.60" fill="#222222" rx="9.3"/>
<text x="711.10" y="285.75" font-family="Liberation Sans" font-size="15.5" fill="#d0d0d0" text-anchor="middle" letter-spacing="0.4">-Inf</text>
<path d="M704.40,300.5 L717.40,300.5 L710.90,307.5 Z" fill="none" stroke="#161616" stroke-width="1.6"/>
<path d="M700.57,349.04 A19.5,19.5 0 1 1 721.23,349.04" fill="none" stroke="#bebebe" stroke-width="2.8" stroke-linecap="butt"/>
<line x1="710.90" y1="332.50" x2="710.90" y2="313.00" stroke="#bebebe" stroke-width="2.8" stroke-linecap="butt"/>
<rect x="692.60" y="360.70" width="36.70" height="36.60" fill="#161616"/>
<rect x="693.60" y="361.70" width="34.70" height="34.60" fill="#b34a00"/>
<text x="710.90" y="384.94" font-family="Liberation Sans" font-size="18" fill="#eeddcc" text-anchor="middle" font-weight="bold">8</text>
<rect x="692.60" y="404.70" width="36.70" height="20.60" fill="#141414"/>
<rect x="693.60" y="405.70" width="34.70" height="18.60" fill="#3a3937"/>
<text x="710.90" y="420.23" font-family="Liberation Sans" font-size="16" fill="#dcdcdc" text-anchor="middle" font-weight="bold">S</text>
<rect x="692.60" y="432.70" width="36.70" height="20.60" fill="#141414"/>
<rect x="693.60" y="433.70" width="34.70" height="18.60" fill="#3a3937"/>
<circle cx="710.90" cy="443" r="5.5" fill="#d8d8d8"/>
<path d="M711.90,439 L711.90,445.5 L708.60,445.5" fill="none" stroke="#222" stroke-width="1.6"/>
<rect x="753.00" y="270.40" width="7.60" height="183.30" fill="#0a0a0a"/>
<rect x="762.60" y="270.40" width="7.70" height="183.30" fill="#0a0a0a"/>
<rect x="753.00" y="288.00" width="17.30" height="1.80" fill="#303030"/>
<rect x="773.90" y="270.70" width="6.70" height="1.30" fill="#282828"/>
<rect x="773.90" y="287.90" width="6.70" height="1.30" fill="#282828"/>
<rect x="773.90" y="305.60" width="6.70" height="1.30" fill="#282828"/>
<rect x="773.90" y="324.10" width="6.70" height="1.30" fill="#282828"/>
<rect x="773.90" y="342.60" width="6.70" height="1.30" fill="#282828"/>
<rect x="773.90" y="360.40" width="6.70" height="1.30" fill="#282828"/>
<rect x="773.90" y="378.40" width="6.70" height="1.30" fill="#282828"/>
<rect x="773.90" y="394.90" width="6.70" height="1.30" fill="#282828"/>
<rect x="773.90" y="410.40" width="6.70" height="1.30" fill="#282828"/>
<rect x="773.90" y="420.90" width="6.70" height="1.30" fill="#282828"/>
<rect x="773.90" y="431.20" width="6.70" height="1.30" fill="#282828"/>
<rect x="773.90" y="442.20" width="6.70" height="1.30" fill="#282828"/>
<rect x="773.90" y="448.90" width="6.70" height="1.30" fill="#282828"/>
<path d="M774.90,306.70 L788.10,299.70 L788.10,313.70 Z" fill="#363636" stroke="#141414" stroke-width="1.8"/>
<text x="809.50" y="295.25" font-family="Liberation Sans" font-size="15.5" fill="#c8c8c8" text-anchor="end" letter-spacing="0.4">0</text>
<text x="809.50" y="330.25" font-family="Liberation Sans" font-size="15.5" fill="#c8c8c8" text-anchor="end" letter-spacing="0.4">12</text>
<text x="809.50" y="366.05" font-family="Liberation Sans" font-size="15.5" fill="#c8c8c8" text-anchor="end" letter-spacing="0.4">24</text>
<text x="809.50" y="400.75" font-family="Liberation Sans" font-size="15.5" fill="#c8c8c8" text-anchor="end" letter-spacing="0.4">36</text>
<text x="809.50" y="427.05" font-family="Liberation Sans" font-size="15.5" fill="#c8c8c8" text-anchor="end" letter-spacing="0.4">48</text>
<text x="809.50" y="447.95" font-family="Liberation Sans" font-size="15.5" fill="#c8c8c8" text-anchor="end" letter-spacing="0.4">60</text>
<rect x="820.25" y="-10.00" width="152.70" height="180.30" fill="#303030"/>
<rect x="820.25" y="173.40" width="152.70" height="86.90" fill="#303030"/>
<rect x="820.25" y="264.00" width="152.70" height="196.70" fill="#303030"/>
<text x="823.25" y="2.55" font-family="Liberation Sans" font-size="15.5" fill="#d0d0d0" text-anchor="start" font-weight="bold" letter-spacing="0.02999999999999997">MIDI From</text>
<rect x="823.25" y="8.00" width="145.00" height="21.00" fill="#101010"/>
<rect x="824.25" y="9.00" width="143.00" height="19.00" fill="#202020"/>
<text x="826.55" y="23.85" font-family="Liberation Sans" font-size="15.5" fill="#c9c9c9" text-anchor="start" letter-spacing="0.35">MPK mini Input (I</text>
<rect x="951.75" y="9.00" width="16.50" height="18.80" fill="#202020"/>
<path d="M954.60,14.70 L965.30,14.70 L959.95,22.50 Z" fill="#050505"/>
<rect x="823.25" y="34.70" width="145.00" height="20.50" fill="#111111"/>
<rect x="824.25" y="35.70" width="143.00" height="18.50" fill="#2a2a2a"/>
<text x="826.55" y="50.25" font-family="Liberation Sans" font-size="15.5" fill="#c9c9c9" text-anchor="start" letter-spacing="0.6">All Channels</text>
<text x="823.25" y="71.75" font-family="Liberation Sans" font-size="15.5" fill="#d0d0d0" text-anchor="start" font-weight="bold" letter-spacing="0.02999999999999997">Monitor</text>
<rect x="823.25" y="77.30" width="30.80" height="20.60" fill="#141414"/>
<rect x="824.25" y="78.30" width="28.80" height="18.60" fill="#3a3937"/>
<text x="838.95" y="92.85" font-family="Liberation Sans" font-size="15.5" fill="#cacaca" text-anchor="middle" letter-spacing="0.6">In</text>
<rect x="859.45" y="77.30" width="41.80" height="20.60" fill="#141414"/>
<rect x="860.45" y="78.30" width="39.80" height="18.60" fill="#5b5955"/>
<text x="880.65" y="92.85" font-family="Liberation Sans" font-size="15.5" fill="#cacaca" text-anchor="middle" letter-spacing="0.6">Auto</text>
<rect x="906.95" y="77.30" width="30.10" height="20.60" fill="#141414"/>
<rect x="907.95" y="78.30" width="28.10" height="18.60" fill="#3a3937"/>
<text x="922.30" y="92.85" font-family="Liberation Sans" font-size="15.5" fill="#cacaca" text-anchor="middle" letter-spacing="0.6">Off</text>
<text x="823.25" y="114.35" font-family="Liberation Sans" font-size="15.5" fill="#d0d0d0" text-anchor="start" font-weight="bold" letter-spacing="0.02999999999999997">Audio To</text>
<rect x="823.25" y="120.00" width="145.00" height="20.50" fill="#101010"/>
<rect x="824.25" y="121.00" width="143.00" height="18.50" fill="#202020"/>
<text x="826.55" y="135.55" font-family="Liberation Sans" font-size="15.5" fill="#c9c9c9" text-anchor="start" letter-spacing="0.6">Master</text>
<path d="M954.60,126.40 L965.30,126.40 L959.95,134.20 Z" fill="#050505"/>
<rect x="823.25" y="145.90" width="145.00" height="20.80" fill="#111111"/>
<rect x="824.25" y="146.90" width="143.00" height="18.80" fill="#2e2e2e"/>
<text x="920.76" y="194.05" font-family="Liberation Sans" font-size="15.5" fill="#d0d0d0" text-anchor="middle" font-weight="bold" letter-spacing="0.02999999999999997">Sends</text>
<path d="M856.48,216.91 A19,19 0 1 1 876.62,216.91" fill="none" stroke="#bebebe" stroke-width="2.8" stroke-linecap="butt"/>
<line x1="866.55" y1="200.80" x2="856.48" y2="216.91" stroke="#bebebe" stroke-width="2.8" stroke-linecap="butt"/>
<path d="M910.48,244.81 A19,19 0 1 1 930.62,244.81" fill="none" stroke="#bebebe" stroke-width="2.8" stroke-linecap="butt"/>
<line x1="920.55" y1="228.70" x2="910.48" y2="244.81" stroke="#bebebe" stroke-width="2.8" stroke-linecap="butt"/>
<text x="866.55" y="225.31" font-family="Liberation Sans" font-size="14" fill="#cccccc" text-anchor="middle" font-weight="bold">A</text>
<text x="920.45" y="252.81" font-family="Liberation Sans" font-size="14" fill="#cccccc" text-anchor="middle" font-weight="bold">B</text>
<rect x="838.25" y="270.40" width="56.70" height="20.60" fill="#151515" rx="10.3"/>
<rect x="839.25" y="271.40" width="54.70" height="18.60" fill="#222222" rx="9.3"/>
<text x="866.75" y="285.75" font-family="Liberation Sans" font-size="15.5" fill="#d0d0d0" text-anchor="middle" letter-spacing="0.4">-Inf</text>
<path d="M860.05,300.5 L873.05,300.5 L866.55,307.5 Z" fill="none" stroke="#161616" stroke-width="1.6"/>
<path d="M856.22,349.04 A19.5,19.5 0 1 1 876.88,349.04" fill="none" stroke="#bebebe" stroke-width="2.8" stroke-linecap="butt"/>
<line x1="866.55" y1="332.50" x2="866.55" y2="313.00" stroke="#bebebe" stroke-width="2.8" stroke-linecap="butt"/>
<rect x="848.25" y="360.70" width="36.70" height="36.60" fill="#161616"/>
<rect x="849.25" y="361.70" width="34.70" height="34.60" fill="#b34a00"/>
<text x="866.55" y="384.94" font-family="Liberation Sans" font-size="18" fill="#eeddcc" text-anchor="middle" font-weight="bold">9</text>
<rect x="848.25" y="404.70" width="36.70" height="20.60" fill="#141414"/>
<rect x="849.25" y="405.70" width="34.70" height="18.60" fill="#3a3937"/>
<text x="866.55" y="420.23" font-family="Liberation Sans" font-size="16" fill="#dcdcdc" text-anchor="middle" font-weight="bold">S</text>
<rect x="848.25" y="432.70" width="36.70" height="20.60" fill="#141414"/>
<rect x="849.25" y="433.70" width="34.70" height="18.60" fill="#3a3937"/>
<circle cx="866.55" cy="443" r="5.5" fill="#d8d8d8"/>
<path d="M867.55,439 L867.55,445.5 L864.25,445.5" fill="none" stroke="#222" stroke-width="1.6"/>
<rect x="908.65" y="270.40" width="7.60" height="183.30" fill="#0a0a0a"/>
<rect x="918.25" y="270.40" width="7.70" height="183.30" fill="#0a0a0a"/>
<rect x="908.65" y="288.00" width="17.30" height="1.80" fill="#303030"/>
<rect x="929.55" y="270.70" width="6.70" height="1.30" fill="#282828"/>
<rect x="929.55" y="287.90" width="6.70" height="1.30" fill="#282828"/>
<rect x="929.55" y="305.60" width="6.70" height="1.30" fill="#282828"/>
<rect x="929.55" y="324.10" width="6.70" height="1.30" fill="#282828"/>
<rect x="929.55" y="342.60" width="6.70" height="1.30" fill="#282828"/>
<rect x="929.55" y="360.40" width="6.70" height="1.30" fill="#282828"/>
<rect x="929.55" y="378.40" width="6.70" height="1.30" fill="#282828"/>
<rect x="929.55" y="394.90" width="6.70" height="1.30" fill="#282828"/>
<rect x="929.55" y="410.40" width="6.70" height="1.30" fill="#282828"/>
<rect x="929.55" y="420.90" width="6.70" height="1.30" fill="#282828"/>
<rect x="929.55" y="431.20" width="6.70" height="1.30" fill="#282828"/>
<rect x="929.55" y="442.20" width="6.70" height="1.30" fill="#282828"/>
<rect x="929.55" y="448.90" width="6.70" height="1.30" fill="#282828"/>
<path d="M930.55,292.00 L943.75,285.00 L943.75,299.00 Z" fill="#363636" stroke="#141414" stroke-width="1.8"/>
<text x="965.15" y="295.25" font-family="Liberation Sans" font-size="15.5" fill="#c8c8c8" text-anchor="end" letter-spacing="0.4">0</text>
<text x="965.15" y="330.25" font-family="Liberation Sans" font-size="15.5" fill="#c8c8c8" text-anchor="end" letter-spacing="0.4">12</text>
<text x="965.15" y="366.05" font-family="Liberation Sans" font-size="15.5" fill="#c8c8c8" text-anchor="end" letter-spacing="0.4">24</text>
<text x="965.15" y="400.75" font-family="Liberation Sans" font-size="15.5" fill="#c8c8c8" text-anchor="end" letter-spacing="0.4">36</text>
<text x="965.15" y="427.05" font-family="Liberation Sans" font-size="15.5" fill="#c8c8c8" text-anchor="end" letter-spacing="0.4">48</text>
<text x="965.15" y="447.95" font-family="Liberation Sans" font-size="15.5" fill="#c8c8c8" text-anchor="end" letter-spacing="0.4">60</text>
<rect x="975.90" y="-10.00" width="152.70" height="180.30" fill="#303030"/>
<rect x="975.90" y="173.40" width="152.70" height="86.90" fill="#303030"/>
<rect x="975.90" y="264.00" width="152.70" height="196.70" fill="#303030"/>
<text x="978.90" y="2.55" font-family="Liberation Sans" font-size="15.5" fill="#d0d0d0" text-anchor="start" font-weight="bold" letter-spacing="0.02999999999999997">MIDI From</text>
<rect x="978.90" y="8.00" width="145.00" height="21.00" fill="#101010"/>
<rect x="979.90" y="9.00" width="143.00" height="19.00" fill="#202020"/>
<text x="982.20" y="23.85" font-family="Liberation Sans" font-size="15.5" fill="#c9c9c9" text-anchor="start" letter-spacing="0.35">MPK mini Input (I</text>
<rect x="1107.40" y="9.00" width="16.50" height="18.80" fill="#202020"/>
<path d="M1110.25,14.70 L1120.95,14.70 L1115.60,22.50 Z" fill="#050505"/>
<rect x="978.90" y="34.70" width="145.00" height="20.50" fill="#111111"/>
<rect x="979.90" y="35.70" width="143.00" height="18.50" fill="#2a2a2a"/>
<text x="982.20" y="50.25" font-family="Liberation Sans" font-size="15.5" fill="#c9c9c9" text-anchor="start" letter-spacing="0.6">All Channels</text>
<text x="978.90" y="71.75" font-family="Liberation Sans" font-size="15.5" fill="#d0d0d0" text-anchor="start" font-weight="bold" letter-spacing="0.02999999999999997">Monitor</text>
<rect x="978.90" y="77.30" width="30.80" height="20.60" fill="#141414"/>
<rect x="979.90" y="78.30" width="28.80" height="18.60" fill="#3a3937"/>
<text x="994.60" y="92.85" font-family="Liberation Sans" font-size="15.5" fill="#cacaca" text-anchor="middle" letter-spacing="0.6">In</text>
<rect x="1015.10" y="77.30" width="41.80" height="20.60" fill="#141414"/>
<rect x="1016.10" y="78.30" width="39.80" height="18.60" fill="#5b5955"/>
<text x="1036.30" y="92.85" font-family="Liberation Sans" font-size="15.5" fill="#cacaca" text-anchor="middle" letter-spacing="0.6">Auto</text>
<rect x="1062.60" y="77.30" width="30.10" height="20.60" fill="#141414"/>
<rect x="1063.60" y="78.30" width="28.10" height="18.60" fill="#3a3937"/>
<text x="1077.95" y="92.85" font-family="Liberation Sans" font-size="15.5" fill="#cacaca" text-anchor="middle" letter-spacing="0.6">Off</text>
<text x="978.90" y="114.35" font-family="Liberation Sans" font-size="15.5" fill="#d0d0d0" text-anchor="start" font-weight="bold" letter-spacing="0.02999999999999997">Audio To</text>
<rect x="978.90" y="120.00" width="145.00" height="20.50" fill="#101010"/>
<rect x="979.90" y="121.00" width="143.00" height="18.50" fill="#202020"/>
<text x="982.20" y="135.55" font-family="Liberation Sans" font-size="15.5" fill="#c9c9c9" text-anchor="start" letter-spacing="0.6">Master</text>
<path d="M1110.25,126.40 L1120.95,126.40 L1115.60,134.20 Z" fill="#050505"/>
<rect x="978.90" y="145.90" width="145.00" height="20.80" fill="#111111"/>
<rect x="979.90" y="146.90" width="143.00" height="18.80" fill="#2e2e2e"/>
<text x="1076.42" y="194.05" font-family="Liberation Sans" font-size="15.5" fill="#d0d0d0" text-anchor="middle" font-weight="bold" letter-spacing="0.02999999999999997">Sends</text>
<path d="M1012.13,216.91 A19,19 0 1 1 1032.27,216.91" fill="none" stroke="#bebebe" stroke-width="2.8" stroke-linecap="butt"/>
<line x1="1022.20" y1="200.80" x2="1012.13" y2="216.91" stroke="#bebebe" stroke-width="2.8" stroke-linecap="butt"/>
<path d="M1066.13,244.81 A19,19 0 1 1 1086.27,244.81" fill="none" stroke="#bebebe" stroke-width="2.8" stroke-linecap="butt"/>
<line x1="1076.20" y1="228.70" x2="1066.13" y2="244.81" stroke="#bebebe" stroke-width="2.8" stroke-linecap="butt"/>
<text x="1022.20" y="225.31" font-family="Liberation Sans" font-size="14" fill="#cccccc" text-anchor="middle" font-weight="bold">A</text>
<text x="1076.10" y="252.81" font-family="Liberation Sans" font-size="14" fill="#cccccc" text-anchor="middle" font-weight="bold">B</text>
<rect x="993.90" y="270.40" width="56.70" height="20.60" fill="#151515" rx="10.3"/>
<rect x="994.90" y="271.40" width="54.70" height="18.60" fill="#222222" rx="9.3"/>
<text x="1022.40" y="285.75" font-family="Liberation Sans" font-size="15.5" fill="#d0d0d0" text-anchor="middle" letter-spacing="0.4">-Inf</text>
<path d="M1015.70,300.5 L1028.70,300.5 L1022.20,307.5 Z" fill="none" stroke="#161616" stroke-width="1.6"/>
<path d="M1011.87,349.04 A19.5,19.5 0 1 1 1032.53,349.04" fill="none" stroke="#bebebe" stroke-width="2.8" stroke-linecap="butt"/>
<line x1="1022.20" y1="332.50" x2="1022.20" y2="313.00" stroke="#bebebe" stroke-width="2.8" stroke-linecap="butt"/>
<rect x="1003.90" y="360.70" width="36.70" height="36.60" fill="#161616"/>
<rect x="1004.90" y="361.70" width="34.70" height="34.60" fill="#b34a00"/>
<text x="1022.20" y="384.94" font-family="Liberation Sans" font-size="18" fill="#eeddcc" text-anchor="middle" font-weight="bold">10</text>
<rect x="1003.90" y="404.70" width="36.70" height="20.60" fill="#141414"/>
<rect x="1004.90" y="405.70" width="34.70" height="18.60" fill="#3a3937"/>
<text x="1022.20" y="420.23" font-family="Liberation Sans" font-size="16" fill="#dcdcdc" text-anchor="middle" font-weight="bold">S</text>
<rect x="1003.90" y="432.70" width="36.70" height="20.60" fill="#141414"/>
<rect x="1004.90" y="433.70" width="34.70" height="18.60" fill="#5b5955"/>
<circle cx="1022.20" cy="443" r="5.5" fill="#d8d8d8"/>
<path d="M1023.20,439 L1023.20,445.5 L1019.90,445.5" fill="none" stroke="#222" stroke-width="1.6"/>
<rect x="1064.30" y="270.40" width="7.60" height="183.30" fill="#0a0a0a"/>
<rect x="1073.90" y="270.40" width="7.70" height="183.30" fill="#0a0a0a"/>
<rect x="1064.30" y="288.00" width="17.30" height="1.80" fill="#303030"/>
<rect x="1085.20" y="270.70" width="6.70" height="1.30" fill="#282828"/>
<rect x="1085.20" y="287.90" width="6.70" height="1.30" fill="#282828"/>
<rect x="1085.20" y="305.60" width="6.70" height="1.30" fill="#282828"/>
<rect x="1085.20" y="324.10" width="6.70" height="1.30" fill="#282828"/>
<rect x="1085.20" y="342.60" width="6.70" height="1.30" fill="#282828"/>
<rect x="1085.20" y="360.40" width="6.70" height="1.30" fill="#282828"/>
<rect x="1085.20" y="378.40" width="6.70" height="1.30" fill="#282828"/>
<rect x="1085.20" y="394.90" width="6.70" height="1.30" fill="#282828"/>
<rect x="1085.20" y="410.40" width="6.70" height="1.30" fill="#282828"/>
<rect x="1085.20" y="420.90" width="6.70" height="1.30" fill="#282828"/>
<rect x="1085.20" y="431.20" width="6.70" height="1.30" fill="#282828"/>
<rect x="1085.20" y="442.20" width="6.70" height="1.30" fill="#282828"/>
<rect x="1085.20" y="448.90" width="6.70" height="1.30" fill="#282828"/>
<path d="M1086.20,292.00 L1099.40,285.00 L1099.40,299.00 Z" fill="#363636" stroke="#141414" stroke-width="1.8"/>
<text x="1120.80" y="295.25" font-family="Liberation Sans" font-size="15.5" fill="#c8c8c8" text-anchor="end" letter-spacing="0.4">0</text>
<text x="1120.80" y="330.25" font-family="Liberation Sans" font-size="15.5" fill="#c8c8c8" text-anchor="end" letter-spacing="0.4">12</text>
<text x="1120.80" y="366.05" font-family="Liberation Sans" font-size="15.5" fill="#c8c8c8" text-anchor="end" letter-spacing="0.4">24</text>
<text x="1120.80" y="400.75" font-family="Liberation Sans" font-size="15.5" fill="#c8c8c8" text-anchor="end" letter-spacing="0.4">36</text>
<text x="1120.80" y="427.05" font-family="Liberation Sans" font-size="15.5" fill="#c8c8c8" text-anchor="end" letter-spacing="0.4">48</text>
<text x="1120.80" y="447.95" font-family="Liberation Sans" font-size="15.5" fill="#c8c8c8" text-anchor="end" letter-spacing="0.4">60</text>
<rect x="1131.55" y="-10.00" width="152.70" height="180.30" fill="#303030"/>
<rect x="1131.55" y="173.40" width="152.70" height="86.90" fill="#303030"/>
<rect x="1131.55" y="264.00" width="152.70" height="196.70" fill="#303030"/>
<text x="1134.55" y="2.55" font-family="Liberation Sans" font-size="15.5" fill="#d0d0d0" text-anchor="start" font-weight="bold" letter-spacing="0.02999999999999997">MIDI From</text>
<rect x="1134.55" y="8.00" width="145.00" height="21.00" fill="#101010"/>
<rect x="1135.55" y="9.00" width="143.00" height="19.00" fill="#202020"/>
<text x="1137.85" y="23.85" font-family="Liberation Sans" font-size="15.5" fill="#c9c9c9" text-anchor="start" letter-spacing="0.6">All Ins</text>
<rect x="1263.05" y="9.00" width="16.50" height="18.80" fill="#202020"/>
<rect x="1134.55" y="34.70" width="145.00" height="20.50" fill="#111111"/>
<rect x="1135.55" y="35.70" width="143.00" height="18.50" fill="#2a2a2a"/>
<circle cx="1141.55" cy="40.5" r="2.6" fill="#0e0e0e"/>
<circle cx="1141.55" cy="45" r="2.6" fill="#0e0e0e"/>
<circle cx="1141.55" cy="49.5" r="2.6" fill="#0e0e0e"/>
<text x="1152.55" y="50.25" font-family="Liberation Sans" font-size="15.5" fill="#c9c9c9" text-anchor="start" letter-spacing="0.6">All Channels</text>
<text x="1134.55" y="71.75" font-family="Liberation Sans" font-size="15.5" fill="#d0d0d0" text-anchor="start" font-weight="bold" letter-spacing="0.02999999999999997">Monitor</text>
<rect x="1134.55" y="77.30" width="30.80" height="20.60" fill="#141414"/>
<rect x="1135.55" y="78.30" width="28.80" height="18.60" fill="#3a3937"/>
<text x="1150.25" y="92.85" font-family="Liberation Sans" font-size="15.5" fill="#cacaca" text-anchor="middle" letter-spacing="0.6">In</text>
<rect x="1170.75" y="77.30" width="41.80" height="20.60" fill="#141414"/>
<rect x="1171.75" y="78.30" width="39.80" height="18.60" fill="#b84c00"/>
<text x="1191.95" y="92.85" font-family="Liberation Sans" font-size="15.5" fill="#cacaca" text-anchor="middle" letter-spacing="0.6">Auto</text>
<rect x="1218.25" y="77.30" width="30.10" height="20.60" fill="#141414"/>
<rect x="1219.25" y="78.30" width="28.10" height="18.60" fill="#3a3937"/>
<text x="1233.60" y="92.85" font-family="Liberation Sans" font-size="15.5" fill="#cacaca" text-anchor="middle" letter-spacing="0.6">Off</text>
<text x="1134.55" y="114.35" font-family="Liberation Sans" font-size="15.5" fill="#d0d0d0" text-anchor="start" font-weight="bold" letter-spacing="0.02999999999999997">Audio To</text>
<rect x="1134.55" y="120.00" width="145.00" height="20.50" fill="#101010"/>
<rect x="1135.55" y="121.00" width="143.00" height="18.50" fill="#202020"/>
<text x="1137.85" y="135.55" font-family="Liberation Sans" font-size="15.5" fill="#c9c9c9" text-anchor="start" letter-spacing="0.6">Master</text>
<path d="M1265.90,126.40 L1276.60,126.40 L1271.25,134.20 Z" fill="#050505"/>
<rect x="1134.55" y="145.90" width="145.00" height="20.80" fill="#111111"/>
<rect x="1135.55" y="146.90" width="143.00" height="18.80" fill="#2e2e2e"/>
<text x="1232.07" y="194.05" font-family="Liberation Sans" font-size="15.5" fill="#d0d0d0" text-anchor="middle" font-weight="bold" letter-spacing="0.02999999999999997">Sends</text>
<path d="M1167.78,216.91 A19,19 0 1 1 1187.92,216.91" fill="none" stroke="#bebebe" stroke-width="2.8" stroke-linecap="butt"/>
<line x1="1177.85" y1="200.80" x2="1167.78" y2="216.91" stroke="#bebebe" stroke-width="2.8" stroke-linecap="butt"/>
<path d="M1221.78,244.81 A19,19 0 1 1 1241.92,244.81" fill="none" stroke="#bebebe" stroke-width="2.8" stroke-linecap="butt"/>
<line x1="1231.85" y1="228.70" x2="1221.78" y2="244.81" stroke="#bebebe" stroke-width="2.8" stroke-linecap="butt"/>
<text x="1177.85" y="225.31" font-family="Liberation Sans" font-size="14" fill="#cccccc" text-anchor="middle" font-weight="bold">A</text>
<text x="1231.75" y="252.81" font-family="Liberation Sans" font-size="14" fill="#cccccc" text-anchor="middle" font-weight="bold">B</text>
<rect x="1149.55" y="270.40" width="56.70" height="20.60" fill="#151515" rx="10.3"/>
<rect x="1150.55" y="271.40" width="54.70" height="18.60" fill="#222222" rx="9.3"/>
<text x="1178.05" y="285.75" font-family="Liberation Sans" font-size="15.5" fill="#d0d0d0" text-anchor="middle" letter-spacing="0.4">-5.35</text>
<path d="M1171.35,300.5 L1184.35,300.5 L1177.85,307.5 Z" fill="none" stroke="#161616" stroke-width="1.6"/>
<path d="M1167.52,349.04 A19.5,19.5 0 1 1 1188.18,349.04" fill="none" stroke="#bebebe" stroke-width="2.8" stroke-linecap="butt"/>
<line x1="1177.85" y1="332.50" x2="1177.85" y2="313.00" stroke="#bebebe" stroke-width="2.8" stroke-linecap="butt"/>
<rect x="1159.55" y="360.70" width="36.70" height="36.60" fill="#161616"/>
<rect x="1160.55" y="361.70" width="34.70" height="34.60" fill="#b34a00"/>
<text x="1177.85" y="384.94" font-family="Liberation Sans" font-size="18" fill="#eeddcc" text-anchor="middle" font-weight="bold">11</text>
<rect x="1159.55" y="404.70" width="36.70" height="20.60" fill="#141414"/>
<rect x="1160.55" y="405.70" width="34.70" height="18.60" fill="#3a3937"/>
<text x="1177.85" y="420.23" font-family="Liberation Sans" font-size="16" fill="#dcdcdc" text-anchor="middle" font-weight="bold">S</text>
<rect x="1159.55" y="432.70" width="36.70" height="20.60" fill="#141414"/>
<rect x="1160.55" y="433.70" width="34.70" height="18.60" fill="#3a3937"/>
<circle cx="1177.85" cy="443" r="5.5" fill="#d8d8d8"/>
<path d="M1178.85,439 L1178.85,445.5 L1175.55,445.5" fill="none" stroke="#222" stroke-width="1.6"/>
<rect x="1219.95" y="270.40" width="7.60" height="183.30" fill="#0a0a0a"/>
<rect x="1229.55" y="270.40" width="7.70" height="183.30" fill="#0a0a0a"/>
<rect x="1219.95" y="288.00" width="17.30" height="1.80" fill="#303030"/>
<rect x="1240.85" y="270.70" width="6.70" height="1.30" fill="#282828"/>
<rect x="1240.85" y="287.90" width="6.70" height="1.30" fill="#282828"/>
<rect x="1240.85" y="305.60" width="6.70" height="1.30" fill="#282828"/>
<rect x="1240.85" y="324.10" width="6.70" height="1.30" fill="#282828"/>
<rect x="1240.85" y="342.60" width="6.70" height="1.30" fill="#282828"/>
<rect x="1240.85" y="360.40" width="6.70" height="1.30" fill="#282828"/>
<rect x="1240.85" y="378.40" width="6.70" height="1.30" fill="#282828"/>
<rect x="1240.85" y="394.90" width="6.70" height="1.30" fill="#282828"/>
<rect x="1240.85" y="410.40" width="6.70" height="1.30" fill="#282828"/>
<rect x="1240.85" y="420.90" width="6.70" height="1.30" fill="#282828"/>
<rect x="1240.85" y="431.20" width="6.70" height="1.30" fill="#282828"/>
<rect x="1240.85" y="442.20" width="6.70" height="1.30" fill="#282828"/>
<rect x="1240.85" y="448.90" width="6.70" height="1.30" fill="#282828"/>
<path d="M1241.85,292.00 L1255.05,285.00 L1255.05,299.00 Z" fill="#363636" stroke="#141414" stroke-width="1.8"/>
<text x="1276.45" y="295.25" font-family="Liberation Sans" font-size="15.5" fill="#c8c8c8" text-anchor="end" letter-spacing="0.4">0</text>
<text x="1276.45" y="330.25" font-family="Liberation Sans" font-size="15.5" fill="#c8c8c8" text-anchor="end" letter-spacing="0.4">12</text>
<text x="1276.45" y="366.05" font-family="Liberation Sans" font-size="15.5" fill="#c8c8c8" text-anchor="end" letter-spacing="0.4">24</text>
<text x="1276.45" y="400.75" font-family="Liberation Sans" font-size="15.5" fill="#c8c8c8" text-anchor="end" letter-spacing="0.4">36</text>
<text x="1276.45" y="427.05" font-family="Liberation Sans" font-size="15.5" fill="#c8c8c8" text-anchor="end" letter-spacing="0.4">48</text>
<text x="1276.45" y="447.95" font-family="Liberation Sans" font-size="15.5" fill="#c8c8c8" text-anchor="end" letter-spacing="0.4">60</text>
<rect x="0.00" y="460.70" width="1200.00" height="9.30" fill="#444444"/>
<rect x="0.00" y="460.30" width="1200.00" height="1.60" fill="#222222"/>
<rect x="0.00" y="470.00" width="1200.00" height="14.20" fill="#25282b"/>
<rect x="0.00" y="484.20" width="1200.00" height="13.80" fill="#444444"/>
<rect x="0.00" y="498.00" width="1200.00" height="12.90" fill="#060606"/>
<rect x="0.00" y="510.90" width="1200.00" height="314.00" fill="#282828"/>
<path d="M-20,548.2 L-20,520.8 L273,520.8 Q279,520.8 279,526.8 L279,548.2 Z" fill="#212121"/>
<rect x="-20.00" y="548.20" width="299.00" height="276.80" fill="#2e2e2e"/>
<text x="16.00" y="540.39" font-family="Liberation Sans" font-size="17" fill="#d6d6d6" text-anchor="end" font-weight="bold" font-style="italic">EQ</text>
<circle cx="237.3" cy="534.4" r="9.6" fill="#353535" stroke="#121212" stroke-width="1.4"/>
<path d="M237.60,529.60 A5,5 0 0 0 232.70,534.60" fill="none" stroke="#d2d2d2" stroke-width="1.9"/>
<path d="M230.10,534.10 L235.10,534.10 L232.60,537.60 Z" fill="#d2d2d2"/>
<path d="M236.70,539.80 A5,5 0 0 0 241.90,534.60" fill="none" stroke="#d2d2d2" stroke-width="1.9"/>
<path d="M244.50,535.00 L239.50,535.00 L242.00,531.40 Z" fill="#d2d2d2"/>
<circle cx="265" cy="534.4" r="9.6" fill="#353535" stroke="#121212" stroke-width="1.4"/>
<path d="M259.70,529.40 L268.00,529.40 L271.00,532.40 L271.00,540.40 L259.70,540.40 Z" fill="#d4d4d4"/>
<rect x="263.20" y="531.10" width="3.8" height="2.3" fill="#2a2a2a"/>
<rect x="-66.50" y="555.50" width="80.30" height="129.00" rx="8" fill="#252525"/>
<clipPath id="c-660_556"><rect x="-65.00" y="557.00" width="77.30" height="126.00" rx="7"/></clipPath>
<g clip-path="url(#c-660_556)"><rect x="-66" y="556" width="79.3" height="128" fill="#2f2f2f"/><rect x="-66" y="556" width="79.3" height="46.5" fill="#3c3c3c"/></g>
<rect x="-66.50" y="690.40" width="80.30" height="129.80" rx="8" fill="#252525"/>
<clipPath id="c-660_690"><rect x="-65.00" y="691.90" width="77.30" height="126.80" rx="7"/></clipPath>
<g clip-path="url(#c-660_690)"><rect x="-66" y="690.9" width="79.3" height="128.80000000000007" fill="#2f2f2f"/><rect x="-66" y="690.9" width="79.3" height="45.89999999999998" fill="#3c3c3c"/></g>
<rect x="19.30" y="555.50" width="80.20" height="129.00" rx="8" fill="#252525"/>
<clipPath id="c198_556"><rect x="20.80" y="557.00" width="77.20" height="126.00" rx="7"/></clipPath>
<g clip-path="url(#c198_556)"><rect x="19.8" y="556" width="79.2" height="128" fill="#2f2f2f"/><rect x="19.8" y="556" width="79.2" height="46.5" fill="#3c3c3c"/></g>
<rect x="19.30" y="690.40" width="80.20" height="129.80" rx="8" fill="#252525"/>
<clipPath id="c198_690"><rect x="20.80" y="691.90" width="77.20" height="126.80" rx="7"/></clipPath>
<g clip-path="url(#c198_690)"><rect x="19.8" y="690.9" width="79.2" height="128.80000000000007" fill="#2f2f2f"/><rect x="19.8" y="690.9" width="79.2" height="45.89999999999998" fill="#3c3c3c"/></g>
<rect x="104.50" y="555.50" width="80.90" height="129.00" rx="8" fill="#252525"/>
<clipPath id="c1050_556"><rect x="106.00" y="557.00" width="77.90" height="126.00" rx="7"/></clipPath>
<g clip-path="url(#c1050_556)"><rect x="105" y="556" width="79.9" height="128" fill="#2f2f2f"/><rect x="105" y="556" width="79.9" height="46.5" fill="#3c3c3c"/></g>
<rect x="104.50" y="690.40" width="80.90" height="129.80" rx="8" fill="#252525"/>
<clipPath id="c1050_690"><rect x="106.00" y="691.90" width="77.90" height="126.80" rx="7"/></clipPath>
<g clip-path="url(#c1050_690)"><rect x="105" y="690.9" width="79.9" height="128.80000000000007" fill="#2f2f2f"/><rect x="105" y="690.9" width="79.9" height="45.89999999999998" fill="#3c3c3c"/></g>
<rect x="189.90" y="555.50" width="80.10" height="129.00" rx="8" fill="#252525"/>
<clipPath id="c1904_556"><rect x="191.40" y="557.00" width="77.10" height="126.00" rx="7"/></clipPath>
<g clip-path="url(#c1904_556)"><rect x="190.4" y="556" width="79.1" height="128" fill="#2f2f2f"/><rect x="190.4" y="556" width="79.1" height="46.5" fill="#3c3c3c"/></g>
<rect x="189.90" y="690.40" width="80.10" height="129.80" rx="8" fill="#252525"/>
<clipPath id="c1904_690"><rect x="191.40" y="691.90" width="77.10" height="126.80" rx="7"/></clipPath>
<g clip-path="url(#c1904_690)"><rect x="190.4" y="690.9" width="79.1" height="128.80000000000007" fill="#2f2f2f"/><rect x="190.4" y="690.9" width="79.1" height="45.89999999999998" fill="#3c3c3c"/></g>
<text x="59.64" y="573.95" font-family="Liberation Sans" font-size="15.5" fill="#c8c8c8" text-anchor="middle" letter-spacing="0.48" word-spacing="1.5">Mid Freq</text>
<path d="M49.23,652.38 A19.2,19.2 0 1 1 69.57,652.38" fill="none" stroke="#bebebe" stroke-width="2.8" stroke-linecap="butt"/>
<path d="M49.23,652.38 A19.2,19.2 0 0 1 61.74,617.04" fill="none" stroke="#e05300" stroke-width="2.8" stroke-linecap="butt"/>
<line x1="59.40" y1="636.10" x2="61.74" y2="617.04" stroke="#bebebe" stroke-width="2.8" stroke-linecap="butt"/>
<text x="59.64" y="669.45" font-family="Liberation Sans" font-size="15.5" fill="#c8c8c8" text-anchor="middle" letter-spacing="0.48">974 Hz</text>
<text x="59.64" y="708.45" font-family="Liberation Sans" font-size="15.5" fill="#c8c8c8" text-anchor="middle" letter-spacing="0.48">Drive</text>
<text x="59.64" y="727.35" font-family="Liberation Sans" font-size="15.5" fill="#c8c8c8" text-anchor="middle" letter-spacing="0.48">(@LPF)</text>
<path d="M49.23,787.18 A19.2,19.2 0 1 1 69.57,787.18" fill="none" stroke="#bebebe" stroke-width="2.8" stroke-linecap="butt"/>
<path d="M49.23,787.18 A19.2,19.2 0 0 1 40.31,768.89" fill="none" stroke="#e05300" stroke-width="2.8" stroke-linecap="butt"/>
<line x1="59.40" y1="770.90" x2="40.31" y2="768.89" stroke="#bebebe" stroke-width="2.8" stroke-linecap="butt"/>
<text x="59.64" y="803.65" font-family="Liberation Sans" font-size="15.5" fill="#c8c8c8" text-anchor="middle" letter-spacing="0.48">5.29 dB</text>
<text x="145.19" y="573.95" font-family="Liberation Sans" font-size="15.5" fill="#c8c8c8" text-anchor="middle" letter-spacing="0.48" word-spacing="1.5">Mid Gain</text>
<path d="M134.78,652.38 A19.2,19.2 0 1 1 155.12,652.38" fill="none" stroke="#bebebe" stroke-width="2.8" stroke-linecap="butt"/>
<path d="M134.78,652.38 A19.2,19.2 0 0 1 132.61,650.81" fill="none" stroke="#e05300" stroke-width="2.8" stroke-linecap="butt"/>
<line x1="144.95" y1="636.10" x2="132.61" y2="650.81" stroke="#bebebe" stroke-width="2.8" stroke-linecap="butt"/>
<text x="145.19" y="669.45" font-family="Liberation Sans" font-size="15.5" fill="#c8c8c8" text-anchor="middle" letter-spacing="0.48">-13.6 dB</text>
<text x="145.19" y="708.45" font-family="Liberation Sans" font-size="15.5" fill="#c8c8c8" text-anchor="middle" letter-spacing="0.48" word-spacing="1.5">Mid Q</text>
<path d="M134.78,787.18 A19.2,19.2 0 1 1 155.12,787.18" fill="none" stroke="#bebebe" stroke-width="2.8" stroke-linecap="butt"/>
<path d="M134.78,787.18 A19.2,19.2 0 0 1 133.94,755.17" fill="none" stroke="#e05300" stroke-width="2.8" stroke-linecap="butt"/>
<line x1="144.95" y1="770.90" x2="133.94" y2="755.17" stroke="#bebebe" stroke-width="2.8" stroke-linecap="butt"/>
<text x="145.19" y="803.65" font-family="Liberation Sans" font-size="15.5" fill="#c8c8c8" text-anchor="middle" letter-spacing="0.48">0.71</text>
<text x="230.19" y="573.95" font-family="Liberation Sans" font-size="15.5" fill="#c8c8c8" text-anchor="middle" letter-spacing="0.48" word-spacing="1.5">LPF</text>
<path d="M219.78,652.38 A19.2,19.2 0 1 1 240.12,652.38" fill="none" stroke="#bebebe" stroke-width="2.8" stroke-linecap="butt"/>
<path d="M219.78,652.38 A19.2,19.2 0 1 1 247.75,643.29" fill="none" stroke="#e05300" stroke-width="2.8" stroke-linecap="butt"/>
<line x1="229.95" y1="636.10" x2="247.75" y2="643.29" stroke="#bebebe" stroke-width="2.8" stroke-linecap="butt"/>
<text x="230.19" y="669.45" font-family="Liberation Sans" font-size="15.5" fill="#c8c8c8" text-anchor="middle" letter-spacing="0.48">15.2 kHz</text>
<text x="230.19" y="708.45" font-family="Liberation Sans" font-size="15.5" fill="#c8c8c8" text-anchor="middle" letter-spacing="0.48" word-spacing="1.5">LPF Res</text>
<path d="M219.78,787.18 A19.2,19.2 0 1 1 240.12,787.18" fill="none" stroke="#bebebe" stroke-width="2.8" stroke-linecap="butt"/>
<line x1="229.95" y1="770.90" x2="219.78" y2="787.18" stroke="#bebebe" stroke-width="2.8" stroke-linecap="butt"/>
<text x="230.19" y="803.65" font-family="Liberation Sans" font-size="15.5" fill="#c8c8c8" text-anchor="middle" letter-spacing="0.48">0.0 %</text>
<text x="7.48" y="669.45" font-family="Liberation Sans" font-size="15.5" fill="#c8c8c8" text-anchor="end" letter-spacing="0.48">Hz</text>
<circle cx="131.2" cy="650.2" r="1.8" fill="#e05300"/>
<path d="M285.2,548.2 L285.2,527 Q285.2,520.8 291.2,520.8 L734.5,520.8 L734.5,548.2 Z" fill="#212121"/>
<rect x="285.20" y="548.20" width="449.30" height="276.80" fill="#2e2e2e"/>
<circle cx="301.25" cy="534.75" r="9.4" fill="#141414"/>
<circle cx="301.25" cy="534.75" r="7.65" fill="#333538" stroke="#b94a00" stroke-width="2.6"/>
<rect x="300.00" y="531.05" width="2.50" height="7.80" fill="#b94a00"/>
<circle cx="327.2" cy="534.5" r="9.6" fill="#353535" stroke="#121212" stroke-width="1.4"/>
<path d="M321.25,531.00 L333.25,531.00 L327.25,541.20 Z" fill="#dcdcdc"/>
<text x="345.70" y="540.39" font-family="Liberation Sans" font-size="17" fill="#d6d6d6" text-anchor="start" font-weight="bold" font-style="italic">Glue Compressor</text>
<text x="643.90" y="539.21" font-family="Liberation Sans" font-size="16.5" fill="#4a4a4a" text-anchor="middle" font-weight="bold" letter-spacing="-0.6">cytomic</text>
<circle cx="692.7" cy="534.5" r="9.6" fill="#353535" stroke="#121212" stroke-width="1.4"/>
<path d="M693.00,529.70 A5,5 0 0 0 688.10,534.70" fill="none" stroke="#d2d2d2" stroke-width="1.9"/>
<path d="M685.50,534.20 L690.50,534.20 L688.00,537.70 Z" fill="#d2d2d2"/>
<path d="M692.10,539.90 A5,5 0 0 0 697.30,534.70" fill="none" stroke="#d2d2d2" stroke-width="1.9"/>
<path d="M699.90,535.10 L694.90,535.10 L697.40,531.50 Z" fill="#d2d2d2"/>
<circle cx="718.7" cy="534.5" r="9.6" fill="#353535" stroke="#121212" stroke-width="1.4"/>
<path d="M713.40,529.50 L721.70,529.50 L724.70,532.50 L724.70,540.50 L713.40,540.50 Z" fill="#d4d4d4"/>
<rect x="716.90" y="531.20" width="3.8" height="2.3" fill="#2a2a2a"/>
<text x="344.44" y="572.85" font-family="Liberation Sans" font-size="15.5" fill="#c8c8c8" text-anchor="middle" letter-spacing="0.48">Attack</text>
<line x1="324.16" y1="623.60" x2="319.43" y2="625.23" stroke="#6a6a6a" stroke-width="1.4" stroke-linecap="butt"/>
<line x1="323.93" y1="610.50" x2="319.14" y2="609.04" stroke="#6a6a6a" stroke-width="1.4" stroke-linecap="butt"/>
<line x1="328.57" y1="602.38" x2="324.88" y2="599.00" stroke="#6a6a6a" stroke-width="1.4" stroke-linecap="butt"/>
<line x1="344.20" y1="595.50" x2="344.20" y2="590.50" stroke="#6a6a6a" stroke-width="1.4" stroke-linecap="butt"/>
<line x1="359.83" y1="602.38" x2="363.52" y2="599.00" stroke="#6a6a6a" stroke-width="1.4" stroke-linecap="butt"/>
<line x1="364.47" y1="610.50" x2="369.26" y2="609.04" stroke="#6a6a6a" stroke-width="1.4" stroke-linecap="butt"/>
<line x1="364.24" y1="623.60" x2="368.97" y2="625.23" stroke="#6a6a6a" stroke-width="1.4" stroke-linecap="butt"/>
<circle cx="344.2" cy="616.7" r="17.2" fill="none" stroke="#1c1e26" stroke-width="2.8"/>
<path d="M327.94,622.30 A17.2,17.2 0 0 1 327.51,612.54" fill="none" stroke="#e05300" stroke-width="2.8" stroke-linecap="butt"/>
<line x1="344.20" y1="616.70" x2="327.84" y2="611.38" stroke="#d0d0d0" stroke-width="2.8" stroke-linecap="butt"/>
<text x="305.50" y="633.08" font-family="Liberation Sans" font-size="12.5" fill="#bcbcbc" text-anchor="middle" font-weight="bold">.01</text>
<text x="310.80" y="610.77" font-family="Liberation Sans" font-size="12.5" fill="#bcbcbc" text-anchor="middle" font-weight="bold">.1</text>
<text x="322.50" y="592.27" font-family="Liberation Sans" font-size="12.5" fill="#bcbcbc" text-anchor="middle" font-weight="bold">.3</text>
<text x="344.20" y="587.18" font-family="Liberation Sans" font-size="12.5" fill="#bcbcbc" text-anchor="middle" font-weight="bold">1</text>
<text x="364.40" y="592.27" font-family="Liberation Sans" font-size="12.5" fill="#bcbcbc" text-anchor="middle" font-weight="bold">3</text>
<text x="378.20" y="610.77" font-family="Liberation Sans" font-size="12.5" fill="#bcbcbc" text-anchor="middle" font-weight="bold">10</text>
<text x="379.70" y="633.08" font-family="Liberation Sans" font-size="12.5" fill="#bcbcbc" text-anchor="middle" font-weight="bold">30</text>
<text x="344.04" y="663.05" font-family="Liberation Sans" font-size="15.5" fill="#c8c8c8" text-anchor="middle" letter-spacing="0.48">Release</text>
<line x1="323.76" y1="714.70" x2="319.03" y2="716.33" stroke="#6a6a6a" stroke-width="1.4" stroke-linecap="butt"/>
<line x1="323.53" y1="701.60" x2="318.74" y2="700.14" stroke="#6a6a6a" stroke-width="1.4" stroke-linecap="butt"/>
<line x1="328.17" y1="693.48" x2="324.48" y2="690.10" stroke="#6a6a6a" stroke-width="1.4" stroke-linecap="butt"/>
<line x1="343.80" y1="686.60" x2="343.80" y2="681.60" stroke="#6a6a6a" stroke-width="1.4" stroke-linecap="butt"/>
<line x1="359.43" y1="693.48" x2="363.12" y2="690.10" stroke="#6a6a6a" stroke-width="1.4" stroke-linecap="butt"/>
<line x1="364.07" y1="701.60" x2="368.86" y2="700.14" stroke="#6a6a6a" stroke-width="1.4" stroke-linecap="butt"/>
<line x1="363.84" y1="714.70" x2="368.57" y2="716.33" stroke="#6a6a6a" stroke-width="1.4" stroke-linecap="butt"/>
<circle cx="343.8" cy="707.8" r="17.2" fill="none" stroke="#1c1e26" stroke-width="2.8"/>
<path d="M327.35,712.83 A17.2,17.2 0 1 1 360.33,712.54" fill="none" stroke="#e05300" stroke-width="2.8" stroke-linecap="butt"/>
<line x1="343.80" y1="707.80" x2="360.33" y2="712.54" stroke="#d0d0d0" stroke-width="2.8" stroke-linecap="butt"/>
<text x="310.00" y="723.38" font-family="Liberation Sans" font-size="12.5" fill="#bcbcbc" text-anchor="middle" font-weight="bold">.1</text>
<text x="309.00" y="700.68" font-family="Liberation Sans" font-size="12.5" fill="#bcbcbc" text-anchor="middle" font-weight="bold">.2</text>
<text x="322.00" y="682.27" font-family="Liberation Sans" font-size="12.5" fill="#bcbcbc" text-anchor="middle" font-weight="bold">.4</text>
<text x="343.80" y="677.77" font-family="Liberation Sans" font-size="12.5" fill="#bcbcbc" text-anchor="middle" font-weight="bold">.6</text>
<text x="364.40" y="682.48" font-family="Liberation Sans" font-size="12.5" fill="#bcbcbc" text-anchor="middle" font-weight="bold">.8</text>
<text x="380.00" y="700.48" font-family="Liberation Sans" font-size="12.5" fill="#bcbcbc" text-anchor="middle" font-weight="bold">1.2</text>
<text x="376.70" y="723.48" font-family="Liberation Sans" font-size="12.5" fill="#bcbcbc" text-anchor="middle" font-weight="bold">A</text>
<text x="344.04" y="753.05" font-family="Liberation Sans" font-size="15.5" fill="#c8c8c8" text-anchor="middle" letter-spacing="0.48">Ratio</text>
<line x1="328.17" y1="782.38" x2="324.48" y2="779.00" stroke="#6a6a6a" stroke-width="1.4" stroke-linecap="butt"/>
<line x1="343.80" y1="775.50" x2="343.80" y2="770.50" stroke="#6a6a6a" stroke-width="1.4" stroke-linecap="butt"/>
<line x1="359.43" y1="782.38" x2="363.12" y2="779.00" stroke="#6a6a6a" stroke-width="1.4" stroke-linecap="butt"/>
<circle cx="343.8" cy="796.7" r="17.2" fill="none" stroke="#1c1e26" stroke-width="2.8"/>
<path d="M331.12,785.08 A17.2,17.2 0 0 1 343.80,779.50" fill="none" stroke="#707070" stroke-width="2.8" stroke-linecap="butt"/>
<line x1="343.80" y1="796.70" x2="343.80" y2="779.50" stroke="#1a1a1a" stroke-width="2.8" stroke-linecap="butt"/>
<text x="322.20" y="772.27" font-family="Liberation Sans" font-size="12.5" fill="#bcbcbc" text-anchor="middle" font-weight="bold">2</text>
<text x="343.80" y="767.38" font-family="Liberation Sans" font-size="12.5" fill="#bcbcbc" text-anchor="middle" font-weight="bold">4</text>
<text x="365.10" y="772.27" font-family="Liberation Sans" font-size="12.5" fill="#bcbcbc" text-anchor="middle" font-weight="bold">10</text>
<circle cx="317.3" cy="758.9" r="4.3" fill="#10d830" stroke="#101010" stroke-width="0.8"/>
<defs><linearGradient id="vu" x1="0" y1="0" x2="0" y2="1"><stop offset="0" stop-color="#050505"/><stop offset="1" stop-color="#0e0e0e"/></linearGradient></defs>
<path d="M402,687.9 L402,572 Q402,560 414,560 L619,560 Q631,560 631,572 L631,687.9 Z" fill="url(#vu)"/>
<path d="M402,687.9 L631,687.9 L631,806.5 Q631,816.5 621,816.5 L412,816.5 Q402,816.5 402,806.5 Z" fill="#2a2a2a"/>
<line x1="437.90" y1="635.00" x2="448.75" y2="643.75" stroke="#3c3c3c" stroke-width="2.6" stroke-linecap="butt"/>
<text x="432.70" y="629.71" font-family="Liberation Sans" font-size="14" fill="#3e3e3e" text-anchor="middle">0</text>
<line x1="472.90" y1="607.90" x2="479.20" y2="620.40" stroke="#3c3c3c" stroke-width="2.6" stroke-linecap="butt"/>
<text x="470.20" y="600.11" font-family="Liberation Sans" font-size="14" fill="#3e3e3e" text-anchor="middle">5</text>
<line x1="516.00" y1="598.30" x2="516.00" y2="612.00" stroke="#3c3c3c" stroke-width="2.6" stroke-linecap="butt"/>
<text x="516.00" y="590.51" font-family="Liberation Sans" font-size="14" fill="#3e3e3e" text-anchor="middle">10</text>
<line x1="560.40" y1="607.90" x2="554.20" y2="620.40" stroke="#3c3c3c" stroke-width="2.6" stroke-linecap="butt"/>
<text x="563.50" y="600.11" font-family="Liberation Sans" font-size="14" fill="#3e3e3e" text-anchor="middle">15</text>
<line x1="595.20" y1="635.00" x2="584.80" y2="643.75" stroke="#3c3c3c" stroke-width="2.6" stroke-linecap="butt"/>
<text x="604.00" y="629.71" font-family="Liberation Sans" font-size="14" fill="#3e3e3e" text-anchor="middle">20</text>
<line x1="498.75" y1="599.60" x2="514.60" y2="687.90" stroke="#1a3fd6" stroke-width="2.4" stroke-linecap="butt"/>
<text x="468.14" y="716.95" font-family="Liberation Sans" font-size="15.5" fill="#c8c8c8" text-anchor="middle" letter-spacing="0.48">Threshold</text>
<defs><linearGradient id="bk468" x1="0" y1="0" x2="0" y2="1"><stop offset="0" stop-color="#353535"/><stop offset="1" stop-color="#242424"/></linearGradient></defs>
<circle cx="468.1" cy="754.2" r="30.2" fill="url(#bk468)"/>
<circle cx="468.1" cy="754.2" r="28.4" fill="none" stroke="#1e2024" stroke-width="3.3"/>
<path d="M452.22,777.74 A28.4,28.4 0 1 1 484.99,731.37" fill="none" stroke="#6e6e6e" stroke-width="3.3" stroke-linecap="butt"/>
<line x1="472.56" y1="748.17" x2="484.99" y2="731.37" stroke="#1e2024" stroke-width="2.6" stroke-linecap="butt"/>
<circle cx="441.9" cy="723.1" r="4.3" fill="#10d830" stroke="#101010" stroke-width="0.8"/>
<text x="468.14" y="800.25" font-family="Liberation Sans" font-size="15.5" fill="#c8c8c8" text-anchor="middle" letter-spacing="0.48">-14.8 dB</text>
<text x="563.99" y="716.95" font-family="Liberation Sans" font-size="15.5" fill="#c8c8c8" text-anchor="middle" letter-spacing="0.48">Makeup</text>
<defs><linearGradient id="bk564" x1="0" y1="0" x2="0" y2="1"><stop offset="0" stop-color="#353535"/><stop offset="1" stop-color="#242424"/></linearGradient></defs>
<circle cx="564.6" cy="754.4" r="30.2" fill="url(#bk564)"/>
<circle cx="564.6" cy="754.4" r="28.4" fill="none" stroke="#1e2024" stroke-width="3.3"/>
<path d="M548.72,777.94 A28.4,28.4 0 0 1 551.71,729.10" fill="none" stroke="#6e6e6e" stroke-width="3.3" stroke-linecap="butt"/>
<line x1="561.20" y1="747.72" x2="551.71" y2="729.10" stroke="#1e2024" stroke-width="2.6" stroke-linecap="butt"/>
<circle cx="538.75" cy="723.1" r="4.3" fill="#10d830" stroke="#101010" stroke-width="0.8"/>
<text x="564.44" y="800.25" font-family="Liberation Sans" font-size="15.5" fill="#c8c8c8" text-anchor="middle" letter-spacing="0.48">8.03 dB</text>
<circle cx="665.7" cy="567" r="4.6" fill="#383838"/>
<text x="677.30" y="572.25" font-family="Liberation Sans" font-size="15.5" fill="#c8c8c8" text-anchor="start" letter-spacing="0.48">Clip</text>
<rect x="653.10" y="581.80" width="59.50" height="20.20" fill="#121212"/>
<rect x="654.10" y="582.80" width="57.50" height="18.20" fill="#3a3836"/>
<text x="683.04" y="597.15" font-family="Liberation Sans" font-size="15.5" fill="#cccccc" text-anchor="middle" letter-spacing="0.48">Soft</text>
<rect x="646.20" y="616.00" width="72.90" height="1.20" fill="#262626"/>
<text x="683.44" y="653.25" font-family="Liberation Sans" font-size="15.5" fill="#c8c8c8" text-anchor="middle" letter-spacing="0.48">Range</text>
<path d="M672.87,695.34 A19.5,19.5 0 1 1 693.53,695.34" fill="none" stroke="#bebebe" stroke-width="2.8" stroke-linecap="butt"/>
<path d="M672.87,695.34 A19.5,19.5 0 1 1 693.53,695.34" fill="none" stroke="#e05300" stroke-width="2.8" stroke-linecap="butt"/>
<line x1="683.20" y1="678.80" x2="693.53" y2="695.34" stroke="#bebebe" stroke-width="2.8" stroke-linecap="butt"/>
<text x="683.44" y="712.05" font-family="Liberation Sans" font-size="15.5" fill="#c8c8c8" text-anchor="middle" letter-spacing="0.48">70.0 dB</text>
<text x="683.44" y="753.15" font-family="Liberation Sans" font-size="15.5" fill="#c8c8c8" text-anchor="middle" letter-spacing="0.48">Dry/Wet</text>
<path d="M672.87,795.24 A19.5,19.5 0 1 1 693.53,795.24" fill="none" stroke="#bebebe" stroke-width="2.8" stroke-linecap="butt"/>
<path d="M672.87,795.24 A19.5,19.5 0 1 1 693.53,795.24" fill="none" stroke="#e05300" stroke-width="2.8" stroke-linecap="butt"/>
<line x1="683.20" y1="778.70" x2="693.53" y2="795.24" stroke="#bebebe" stroke-width="2.8" stroke-linecap="butt"/>
<text x="683.44" y="811.95" font-family="Liberation Sans" font-size="15.5" fill="#c8c8c8" text-anchor="middle" letter-spacing="0.48">100 %</text>
<path d="M737.7,548.2 L737.7,527 Q737.7,520.8 743.7,520.8 L1210,520.8 L1210,548.2 Z" fill="#212121"/>
<rect x="737.70" y="548.20" width="472.30" height="276.80" fill="#2e2e2e"/>
<circle cx="752.7" cy="534.5" r="9.4" fill="#141414"/>
<circle cx="752.7" cy="534.5" r="7.65" fill="#333538" stroke="#b94a00" stroke-width="2.6"/>
<rect x="751.45" y="530.80" width="2.50" height="7.80" fill="#b94a00"/>
<text x="771.30" y="540.39" font-family="Liberation Sans" font-size="17" fill="#d6d6d6" text-anchor="start" font-weight="bold" font-style="italic">Flanger</text>
<rect x="812.50" y="556.50" width="1.40" height="262.70" fill="#262626"/>
<rect x="1031.00" y="556.50" width="1.40" height="262.70" fill="#262626"/>
<rect x="1117.50" y="556.50" width="1.40" height="262.70" fill="#262626"/>
<text x="774.14" y="592.25" font-family="Liberation Sans" font-size="15.5" fill="#c8c8c8" text-anchor="middle" letter-spacing="0.48">Hi Pass</text>
<path d="M763.57,634.54 A19.5,19.5 0 1 1 784.23,634.54" fill="none" stroke="#bebebe" stroke-width="2.8" stroke-linecap="butt"/>
<line x1="773.90" y1="618.00" x2="763.57" y2="634.54" stroke="#bebebe" stroke-width="2.8" stroke-linecap="butt"/>
<clipPath id="hp"><rect x="740" y="630" width="59.7" height="30"/></clipPath>
<text x="747.60" y="650.85" font-family="Liberation Sans" font-size="15.5" fill="#c8c8c8" text-anchor="start" letter-spacing="0.9299999999999999" clip-path="url(#hp)">20.0 Hz</text>
<text x="774.14" y="756.45" font-family="Liberation Sans" font-size="15.5" fill="#c8c8c8" text-anchor="middle" letter-spacing="0.48">Dry/Wet</text>
<path d="M763.57,798.24 A19.5,19.5 0 1 1 784.23,798.24" fill="none" stroke="#242424" stroke-width="2.8" stroke-linecap="butt"/>
<line x1="773.90" y1="781.70" x2="763.57" y2="798.24" stroke="#242424" stroke-width="2.8" stroke-linecap="butt"/>
<circle cx="756.3" cy="762.8" r="4.3" fill="#10d830" stroke="#101010" stroke-width="0.8"/>
<text x="774.14" y="815.35" font-family="Liberation Sans" font-size="15.5" fill="#c8c8c8" text-anchor="middle" letter-spacing="0.48">0.00 %</text>
<rect x="824.3" y="574.6" width="196.8" height="196" rx="10" fill="#060606"/>
<circle cx="1010.3" cy="656" r="9" fill="none" stroke="#d8e400" stroke-width="2.2"/>
<text x="826.40" y="788.75" font-family="Liberation Sans" font-size="15.5" fill="#c8c8c8" text-anchor="start" letter-spacing="0.48">Delay Time</text>
<rect x="826.40" y="798.00" width="69.40" height="20.40" fill="#121212"/>
<rect x="827.40" y="799.00" width="67.40" height="18.40" fill="#2a2a2a"/>
<text x="861.94" y="813.45" font-family="Liberation Sans" font-size="15.5" fill="#cccccc" text-anchor="middle" letter-spacing="0.48">7.00 ms</text>
<circle cx="830.2" cy="801.6" r="4.3" fill="#10d830" stroke="#101010" stroke-width="0.8"/>
<rect x="919.90" y="798.50" width="19.90" height="19.40" fill="#151515"/>
<rect x="920.90" y="799.50" width="17.90" height="17.40" fill="#c04e00"/>
<text x="929.85" y="812.71" font-family="Liberation Sans" font-size="14" fill="#f0d8c0" text-anchor="middle" font-weight="bold">+</text>
<text x="947.80" y="788.75" font-family="Liberation Sans" font-size="15.5" fill="#c8c8c8" text-anchor="start" letter-spacing="0.48">Feedback</text>
<rect x="946.00" y="798.00" width="70.00" height="20.40" fill="#121212"/>
<rect x="947.00" y="799.00" width="68.00" height="18.40" fill="#2a2a2a"/>
<text x="981.34" y="813.45" font-family="Liberation Sans" font-size="15.5" fill="#cccccc" text-anchor="middle" letter-spacing="0.48">0.67</text>
<circle cx="949.6" cy="801.6" r="4.3" fill="#10d830" stroke="#101010" stroke-width="0.8"/>
<text x="1076.02" y="569.95" font-family="Liberation Sans" font-size="15.5" fill="#d0d0d0" text-anchor="middle" font-weight="bold" letter-spacing="0.02999999999999997">Envelope</text>
<text x="1131.20" y="569.95" font-family="Liberation Sans" font-size="15.5" fill="#d0d0d0" text-anchor="start" font-weight="bold" letter-spacing="0.02999999999999997">LFO / S&amp;H</text>
<path d="M1062.14,632.16 A19.6,19.6 0 1 1 1089.86,632.16" fill="none" stroke="#242424" stroke-width="3" stroke-linecap="butt"/>
<path d="M1076.00,598.70 A19.6,19.6 0 0 1 1094.93,623.37" fill="none" stroke="#7a7a7a" stroke-width="3" stroke-linecap="butt"/>
<line x1="1076.00" y1="618.30" x2="1094.93" y2="623.37" stroke="#242424" stroke-width="3" stroke-linecap="butt"/>
<path d="M1069.5,587.5 L1082.5,587.5 L1076,594.5 Z" fill="#8a8a8a" stroke="#141414" stroke-width="1.2"/>
<circle cx="1057.4" cy="598.3" r="4.3" fill="#10d830" stroke="#101010" stroke-width="0.8"/>
<text x="1076.24" y="651.65" font-family="Liberation Sans" font-size="15.5" fill="#c8c8c8" text-anchor="middle" letter-spacing="0.48">66.9 %</text>
<text x="1164.64" y="592.35" font-family="Liberation Sans" font-size="15.5" fill="#c8c8c8" text-anchor="middle" letter-spacing="0.48">Amount</text>
<path d="M1150.54,632.16 A19.6,19.6 0 1 1 1178.26,632.16" fill="none" stroke="#242424" stroke-width="3" stroke-linecap="butt"/>
<path d="M1150.54,632.16 A19.6,19.6 0 0 1 1159.99,599.20" fill="none" stroke="#7a7a7a" stroke-width="3" stroke-linecap="butt"/>
<line x1="1164.40" y1="618.30" x2="1159.99" y2="599.20" stroke="#242424" stroke-width="3" stroke-linecap="butt"/>
<circle cx="1146.3" cy="598.3" r="4.3" fill="#10d830" stroke="#101010" stroke-width="0.8"/>
<text x="1164.64" y="651.65" font-family="Liberation Sans" font-size="15.5" fill="#c8c8c8" text-anchor="middle" letter-spacing="0.48">44.9 %</text>
<text x="1076.24" y="674.25" font-family="Liberation Sans" font-size="15.5" fill="#c8c8c8" text-anchor="middle" letter-spacing="0.48">Attack</text>
<path d="M1065.40,717.46 A20,20 0 1 1 1086.60,717.46" fill="none" stroke="#bebebe" stroke-width="2.8" stroke-linecap="butt"/>
<path d="M1065.40,717.46 A20,20 0 0 1 1056.00,700.50" fill="none" stroke="#e05300" stroke-width="2.8" stroke-linecap="butt"/>
<line x1="1076.00" y1="700.50" x2="1056.00" y2="700.50" stroke="#bebebe" stroke-width="2.8" stroke-linecap="butt"/>
<text x="1076.24" y="733.25" font-family="Liberation Sans" font-size="15.5" fill="#c8c8c8" text-anchor="middle" letter-spacing="0.48">6.00 ms</text>
<text x="1164.64" y="674.25" font-family="Liberation Sans" font-size="15.5" fill="#c8c8c8" text-anchor="middle" letter-spacing="0.48">Rate</text>
<path d="M1153.80,717.46 A20,20 0 1 1 1175.00,717.46" fill="none" stroke="#bebebe" stroke-width="2.8" stroke-linecap="butt"/>
<path d="M1153.80,717.46 A20,20 0 0 1 1150.26,686.36" fill="none" stroke="#e05300" stroke-width="2.8" stroke-linecap="butt"/>
<line x1="1164.40" y1="700.50" x2="1150.26" y2="686.36" stroke="#bebebe" stroke-width="2.8" stroke-linecap="butt"/>
<text x="1164.64" y="733.25" font-family="Liberation Sans" font-size="15.5" fill="#c8c8c8" text-anchor="middle" letter-spacing="0.48">0.11 Hz</text>
<text x="1076.24" y="756.35" font-family="Liberation Sans" font-size="15.5" fill="#c8c8c8" text-anchor="middle" letter-spacing="0.48">Release</text>
<path d="M1065.40,798.36 A20,20 0 1 1 1086.60,798.36" fill="none" stroke="#bebebe" stroke-width="2.8" stroke-linecap="butt"/>
<path d="M1065.40,798.36 A20,20 0 0 1 1076.00,761.40" fill="none" stroke="#e05300" stroke-width="2.8" stroke-linecap="butt"/>
<line x1="1076.00" y1="781.40" x2="1076.00" y2="761.40" stroke="#bebebe" stroke-width="2.8" stroke-linecap="butt"/>
<text x="1076.24" y="815.05" font-family="Liberation Sans" font-size="15.5" fill="#c8c8c8" text-anchor="middle" letter-spacing="0.48">200 ms</text>
<text x="1164.64" y="756.35" font-family="Liberation Sans" font-size="15.5" fill="#c8c8c8" text-anchor="middle" letter-spacing="0.48">Phase</text>
<path d="M1153.80,798.36 A20,20 0 1 1 1175.00,798.36" fill="none" stroke="#bebebe" stroke-width="2.8" stroke-linecap="butt"/>
<path d="M1153.80,798.36 A20,20 0 0 1 1164.40,761.40" fill="none" stroke="#e05300" stroke-width="2.8" stroke-linecap="butt"/>
<line x1="1164.40" y1="781.40" x2="1164.40" y2="761.40" stroke="#bebebe" stroke-width="2.8" stroke-linecap="butt"/>
<text x="1164.64" y="815.05" font-family="Liberation Sans" font-size="15.5" fill="#c8c8c8" text-anchor="middle" letter-spacing="0.48">180°</text>
<rect x="279.00" y="520.80" width="6.20" height="304.20" fill="#242424"/>
<rect x="734.50" y="520.80" width="3.20" height="304.20" fill="#262626"/>
<rect x="0.00" y="825.00" width="1200.00" height="13.50" fill="#282828"/>
<rect x="0.00" y="838.30" width="1200.00" height="13.20" fill="#070707"/>
<rect x="0.00" y="851.50" width="1200.00" height="48.50" fill="#070707"/>
<rect x="-10" y="851.7" width="972.8" height="35.7" rx="5" fill="#2a2a2a"/>
<rect x="0.00" y="858.20" width="957.00" height="23.10" fill="#333333"/>
<rect x="977.3" y="851.7" width="240" height="35.7" rx="5" fill="#2a2a2a"/>
<rect x="983.10" y="856.90" width="220.00" height="25.80" fill="#2c2c2c"/>
<path d="M985.5,864.2 L1037.5,863.7" stroke="#6cc8f2" stroke-width="4" stroke-linecap="round"/>
<path d="M985.5,877.3 L1037.5,876.8" stroke="#6cc8f2" stroke-width="4" stroke-linecap="round"/>
<path d="M1037.5,864.2 L1200,864.2" stroke="#6cc8f2" stroke-width="5.8"/>
<path d="M1037.5,877.3 L1200,877.3" stroke="#6cc8f2" stroke-width="5.8"/>
<rect x="1195.00" y="700.00" width="5.00" height="1.60" fill="#5a5a5a"/>
<rect x="1195.00" y="782.70" width="5.00" height="1.60" fill="#5a5a5a"/>
</svg></div></body></html>
